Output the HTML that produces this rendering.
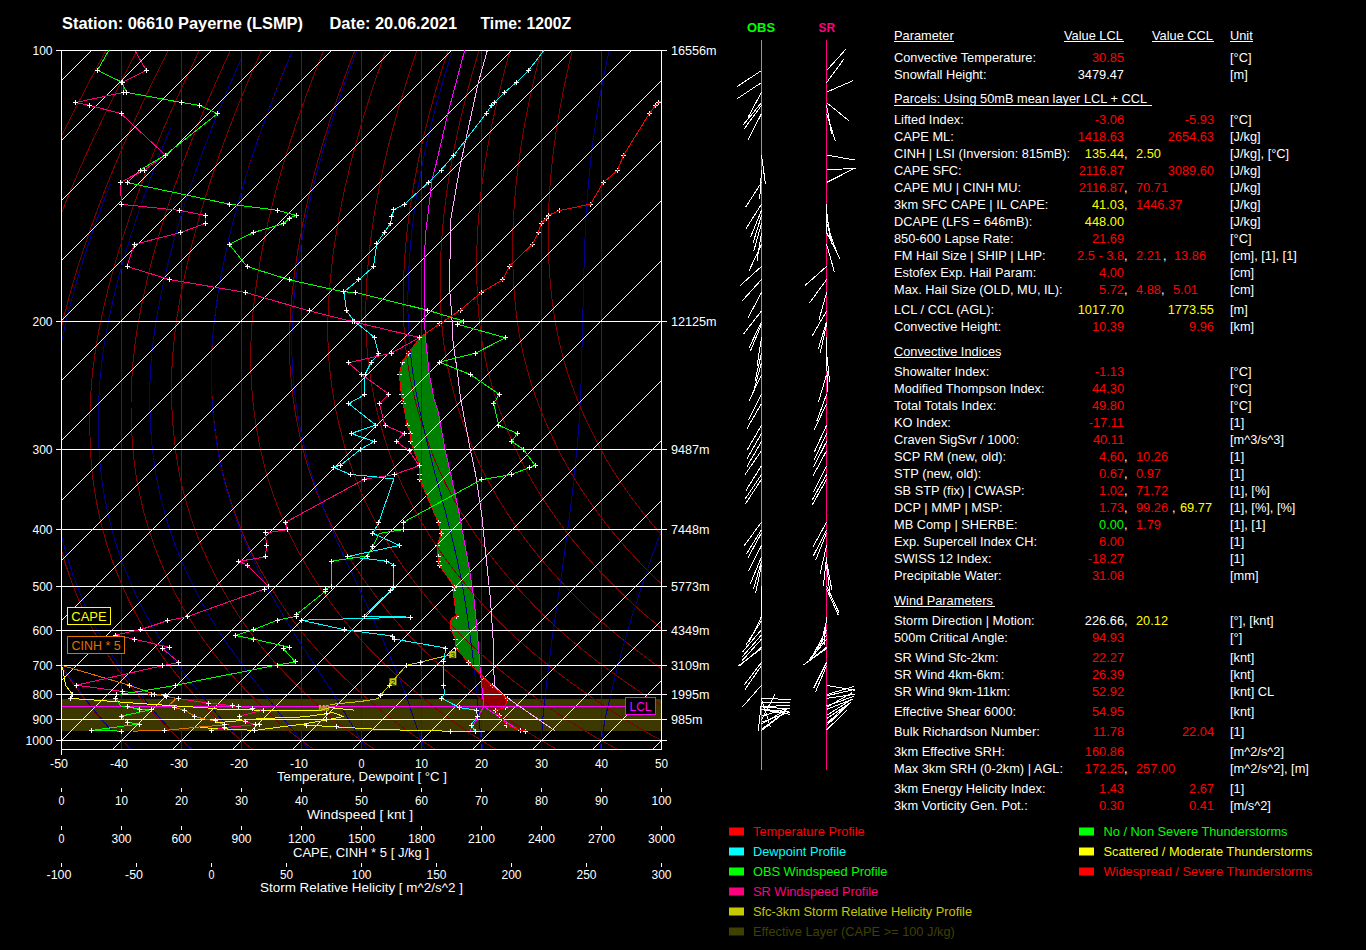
<!DOCTYPE html>
<html><head><meta charset="utf-8"><style>html,body{margin:0;padding:0;background:#000;width:1366px;height:950px;overflow:hidden}svg{display:block}</style></head>
<body><svg width="1366" height="950" viewBox="0 0 1366 950" font-family="Liberation Sans, sans-serif" shape-rendering="auto">
<rect width="1366" height="950" fill="#000"/>
<defs><clipPath id="pc"><rect x="62" y="51" width="599" height="698"/></clipPath></defs>
<rect x="62" y="699" width="599" height="32" fill="#3c3800"/>
<polygon points="424.7,334.0 419.6,337.8 408.3,353.2 402.0,362.1 399.4,374.1 401.3,394.3 403.3,403.6 407.1,425.3 410.3,433.5 410.9,441.5 413.4,449.3 419.7,465.7 419.7,474.5 419.7,479.0 438.0,522.0 441.1,533.4 437.3,545.4 438.0,556.5 438.6,561.2 439.6,565.4 454.4,587.0 453.1,590.9 456.3,616.1 452.0,618.3 450.1,622.7 451.3,630.3 455.8,639.1 455.8,648.0 468.4,662.5 481.0,674.5 480.4,672.0 477.2,630.3 474.1,600.0 472.7,590.9 469.5,570.0 458.8,511.3 450.7,473.9 445.0,449.3 438.1,411.4 434.1,399.3 429.0,372.2 425.3,335.6 425.3,334.0" fill="#008000"/>
<polygon points="481.0,674.5 492.0,685.5 507.4,698.7 505.2,707.5 495.9,710.2 483.8,706.4 480.4,672.0" fill="#900000"/>
<g clip-path="url(#pc)">
<line x1="121.5" y1="51" x2="121.5" y2="749" stroke="#004c00" stroke-width="1" shape-rendering="crispEdges"/>
<line x1="181.5" y1="51" x2="181.5" y2="749" stroke="#004c00" stroke-width="1" shape-rendering="crispEdges"/>
<line x1="241.5" y1="51" x2="241.5" y2="749" stroke="#004c00" stroke-width="1" shape-rendering="crispEdges"/>
<line x1="301.5" y1="51" x2="301.5" y2="749" stroke="#004c00" stroke-width="1" shape-rendering="crispEdges"/>
<line x1="361.5" y1="51" x2="361.5" y2="749" stroke="#004c00" stroke-width="1" shape-rendering="crispEdges"/>
<line x1="421.5" y1="51" x2="421.5" y2="749" stroke="#004c00" stroke-width="1" shape-rendering="crispEdges"/>
<line x1="481.5" y1="51" x2="481.5" y2="749" stroke="#004c00" stroke-width="1" shape-rendering="crispEdges"/>
<line x1="541.5" y1="51" x2="541.5" y2="749" stroke="#004c00" stroke-width="1" shape-rendering="crispEdges"/>
<line x1="601.5" y1="51" x2="601.5" y2="749" stroke="#004c00" stroke-width="1" shape-rendering="crispEdges"/>
<path d="M132.5,3.5 L128.5,10.5 L124.6,17.4 L120.6,24.4 L116.8,31.3 L112.9,38.1 L109.2,44.9 L105.4,51.7 L101.8,58.5 L98.1,65.2 L94.5,71.9 L91.0,78.5 L87.5,85.1 L84.1,91.7 L80.7,98.3 L77.3,104.8 L74.0,111.3 L70.8,117.7 L67.6,124.1 L64.4,130.5 L61.3,136.8 L58.2,143.2 L55.2,149.4 L52.3,155.7 L49.3,161.9 L46.5,168.1 L43.6,174.2 L40.9,180.4 L38.1,186.4 L35.4,192.5 L32.8,198.5 L30.2,204.5 L27.7,210.5 L25.2,216.4 L22.7,222.3 L20.3,228.2 L17.9,234.0 L15.6,239.8 L13.4,245.6 L11.1,251.3 L9.0,257.0 L6.8,262.7 L4.8,268.4 L2.7,274.0 L0.7,279.6 L-1.2,285.1 L-3.1,290.7 L-5.0,296.2 L-6.8,301.6 L-8.5,307.1 L-10.2,312.5 L-11.9,317.9 L-13.5,323.2 L-15.1,328.5 L-16.6,333.8 L-18.0,339.0 L-19.4,344.2 L-20.7,349.3 L-22.0,354.4 L-23.2,359.5 L-24.4,364.5 L-25.5,369.5 L-26.5,374.4 L-27.5,379.3 L-28.5,384.2 L-29.4,389.1 L-30.2,393.9 L-31.1,398.7 L-31.8,403.5 L-32.5,408.2 L-33.2,412.9 L-33.8,417.6 L-34.4,422.3 L-35.0,426.9 L-35.5,431.5 L-36.0,436.1 L-36.4,440.7 L-36.8,445.3 L-37.2,449.9 L-37.6,454.4 L-37.8,458.9 L-38.1,463.4 L-38.2,467.8 L-38.4,472.2 L-38.5,476.6 L-38.5,480.9 L-38.5,485.3 L-38.4,489.5 L-38.3,493.8 L-38.2,498.1 L-38.0,502.3 L-37.8,506.5 L-37.5,510.7 L-37.2,514.9 L-36.9,519.0 L-36.5,523.2 L-36.1,527.3 L-35.7,531.4 L-35.2,535.5 L-34.6,539.5 L-34.1,543.5 L-33.4,547.6 L-32.8,551.5 L-32.1,555.5 L-31.3,559.4 L-30.5,563.4 L-29.7,567.3 L-28.8,571.2 L-27.9,575.0 L-27.0,578.9 L-26.0,582.7 L-25.0,586.6 L-24.0,590.4 L-22.9,594.2 L-21.8,598.0 L-20.7,601.8 L-19.5,605.5 L-18.2,609.3 L-17.0,613.0 L-15.7,616.7 L-14.3,620.4 L-12.9,624.0 L-11.5,627.7 L-10.0,631.3 L-8.5,634.9 L-6.9,638.5 L-5.3,642.0 L-3.6,645.5 L-1.9,649.0 L-0.1,652.5 L1.7,656.0 L3.5,659.5 L5.3,662.9 L7.2,666.3 L9.2,669.7 L11.2,673.1 L13.2,676.5 L15.3,679.9 L17.4,683.2 L19.5,686.5 L21.7,689.9 L23.9,693.2 L26.1,696.5 L28.4,699.8 L30.7,703.1 L33.0,706.4 L35.3,709.7 L37.8,713.0 L40.2,716.2 L42.7,719.4 L45.3,722.6 L48.0,725.7 L50.7,728.8 L53.4,731.9 L56.2,735.0 L59.1,738.0 L62.0,741.0 L64.9,743.9 L67.9,746.9 L71.0,749.8" fill="none" stroke="#800000" stroke-width="1" shape-rendering="crispEdges"/>
<path d="M162.7,3.5 L158.8,10.5 L155.0,17.4 L151.2,24.4 L147.5,31.3 L143.8,38.1 L140.1,44.9 L136.5,51.7 L133.0,58.5 L129.5,65.2 L126.1,71.9 L122.7,78.5 L119.3,85.1 L116.0,91.7 L112.7,98.3 L109.5,104.8 L106.4,111.3 L103.3,117.7 L100.2,124.1 L97.2,130.5 L94.2,136.8 L91.3,143.2 L88.5,149.4 L85.6,155.7 L82.9,161.9 L80.1,168.1 L77.5,174.2 L74.8,180.4 L72.3,186.4 L69.7,192.5 L67.2,198.5 L64.8,204.5 L62.4,210.5 L60.1,216.4 L57.8,222.3 L55.5,228.2 L53.3,234.0 L51.1,239.8 L49.0,245.6 L47.0,251.3 L45.0,257.0 L43.0,262.7 L41.1,268.4 L39.2,274.0 L37.4,279.6 L35.6,285.1 L33.8,290.7 L32.2,296.2 L30.5,301.6 L28.9,307.1 L27.4,312.5 L25.9,317.9 L24.4,323.2 L23.0,328.5 L21.7,333.8 L20.4,339.0 L19.2,344.2 L18.0,349.3 L16.9,354.4 L15.9,359.5 L14.9,364.5 L14.0,369.5 L13.1,374.4 L12.3,379.3 L11.5,384.2 L10.8,389.1 L10.1,393.9 L9.5,398.7 L8.9,403.5 L8.4,408.2 L7.9,412.9 L7.4,417.6 L7.0,422.3 L6.6,426.9 L6.3,431.5 L6.0,436.1 L5.7,440.7 L5.5,445.3 L5.3,449.9 L5.2,454.4 L5.1,458.9 L5.1,463.4 L5.1,467.8 L5.1,472.2 L5.2,476.6 L5.4,480.9 L5.6,485.3 L5.9,489.5 L6.1,493.8 L6.5,498.1 L6.9,502.3 L7.3,506.5 L7.7,510.7 L8.2,514.9 L8.8,519.0 L9.3,523.2 L10.0,527.3 L10.6,531.4 L11.3,535.5 L12.0,539.5 L12.8,543.5 L13.7,547.6 L14.5,551.5 L15.4,555.5 L16.4,559.4 L17.4,563.4 L18.5,567.3 L19.5,571.2 L20.6,575.0 L21.8,578.9 L23.0,582.7 L24.2,586.6 L25.5,590.4 L26.7,594.2 L28.1,598.0 L29.4,601.8 L30.9,605.5 L32.3,609.3 L33.8,613.0 L35.3,616.7 L36.9,620.4 L38.5,624.0 L40.2,627.7 L41.9,631.3 L43.7,634.9 L45.5,638.5 L47.3,642.0 L49.2,645.5 L51.2,649.0 L53.2,652.5 L55.2,656.0 L57.3,659.5 L59.4,662.9 L61.5,666.3 L63.7,669.7 L65.9,673.1 L68.2,676.5 L70.5,679.9 L72.8,683.2 L75.2,686.5 L77.7,689.9 L80.1,693.2 L82.6,696.5 L85.1,699.8 L87.6,703.1 L90.2,706.4 L92.8,709.7 L95.5,713.0 L98.2,716.2 L101.0,719.4 L103.8,722.6 L106.7,725.7 L109.6,728.8 L112.7,731.9 L115.7,735.0 L118.8,738.0 L122.0,741.0 L125.2,743.9 L128.5,746.9 L131.8,749.8" fill="none" stroke="#800000" stroke-width="1" shape-rendering="crispEdges"/>
<path d="M192.9,3.5 L189.1,10.5 L185.4,17.4 L181.8,24.4 L178.1,31.3 L174.6,38.1 L171.1,44.9 L167.6,51.7 L164.2,58.5 L160.9,65.2 L157.6,71.9 L154.3,78.5 L151.1,85.1 L147.9,91.7 L144.8,98.3 L141.8,104.8 L138.8,111.3 L135.8,117.7 L132.9,124.1 L130.0,130.5 L127.2,136.8 L124.4,143.2 L121.7,149.4 L119.0,155.7 L116.4,161.9 L113.8,168.1 L111.3,174.2 L108.8,180.4 L106.4,186.4 L104.0,192.5 L101.7,198.5 L99.4,204.5 L97.1,210.5 L94.9,216.4 L92.8,222.3 L90.7,228.2 L88.7,234.0 L86.6,239.8 L84.7,245.6 L82.8,251.3 L80.9,257.0 L79.1,262.7 L77.4,268.4 L75.6,274.0 L74.0,279.6 L72.4,285.1 L70.8,290.7 L69.3,296.2 L67.8,301.6 L66.4,307.1 L65.0,312.5 L63.6,317.9 L62.3,323.2 L61.1,328.5 L59.9,333.8 L58.8,339.0 L57.8,344.2 L56.8,349.3 L55.9,354.4 L55.0,359.5 L54.2,364.5 L53.5,369.5 L52.8,374.4 L52.1,379.3 L51.5,384.2 L51.0,389.1 L50.5,393.9 L50.0,398.7 L49.6,403.5 L49.3,408.2 L48.9,412.9 L48.7,417.6 L48.4,422.3 L48.3,426.9 L48.1,431.5 L48.0,436.1 L47.9,440.7 L47.9,445.3 L47.9,449.9 L47.9,454.4 L48.0,458.9 L48.2,463.4 L48.4,467.8 L48.6,472.2 L48.9,476.6 L49.3,480.9 L49.7,485.3 L50.1,489.5 L50.6,493.8 L51.1,498.1 L51.7,502.3 L52.3,506.5 L53.0,510.7 L53.7,514.9 L54.4,519.0 L55.2,523.2 L56.0,527.3 L56.9,531.4 L57.8,535.5 L58.7,539.5 L59.7,543.5 L60.8,547.6 L61.8,551.5 L63.0,555.5 L64.1,559.4 L65.3,563.4 L66.6,567.3 L67.9,571.2 L69.2,575.0 L70.6,578.9 L72.0,582.7 L73.4,586.6 L74.9,590.4 L76.4,594.2 L78.0,598.0 L79.5,601.8 L81.2,605.5 L82.9,609.3 L84.6,613.0 L86.3,616.7 L88.1,620.4 L90.0,624.0 L91.9,627.7 L93.8,631.3 L95.8,634.9 L97.8,638.5 L99.9,642.0 L102.1,645.5 L104.2,649.0 L106.5,652.5 L108.7,656.0 L111.0,659.5 L113.4,662.9 L115.7,666.3 L118.2,669.7 L120.6,673.1 L123.1,676.5 L125.7,679.9 L128.3,683.2 L130.9,686.5 L133.6,689.9 L136.3,693.2 L139.0,696.5 L141.8,699.8 L144.6,703.1 L147.4,706.4 L150.2,709.7 L153.2,713.0 L156.1,716.2 L159.2,719.4 L162.3,722.6 L165.4,725.7 L168.6,728.8 L171.9,731.9 L175.2,735.0 L178.6,738.0 L182.0,741.0 L185.5,743.9 L189.1,746.9 L192.7,749.8" fill="none" stroke="#800000" stroke-width="1" shape-rendering="crispEdges"/>
<path d="M223.0,3.5 L219.4,10.5 L215.8,17.4 L212.3,24.4 L208.8,31.3 L205.4,38.1 L202.1,44.9 L198.7,51.7 L195.5,58.5 L192.3,65.2 L189.1,71.9 L186.0,78.5 L182.9,85.1 L179.9,91.7 L176.9,98.3 L174.0,104.8 L171.1,111.3 L168.3,117.7 L165.5,124.1 L162.8,130.5 L160.1,136.8 L157.5,143.2 L154.9,149.4 L152.4,155.7 L149.9,161.9 L147.5,168.1 L145.1,174.2 L142.8,180.4 L140.5,186.4 L138.3,192.5 L136.1,198.5 L133.9,204.5 L131.9,210.5 L129.8,216.4 L127.8,222.3 L125.9,228.2 L124.0,234.0 L122.2,239.8 L120.4,245.6 L118.6,251.3 L116.9,257.0 L115.3,262.7 L113.7,268.4 L112.1,274.0 L110.6,279.6 L109.1,285.1 L107.7,290.7 L106.4,296.2 L105.1,301.6 L103.8,307.1 L102.6,312.5 L101.4,317.9 L100.3,323.2 L99.2,328.5 L98.2,333.8 L97.3,339.0 L96.4,344.2 L95.6,349.3 L94.9,354.4 L94.2,359.5 L93.5,364.5 L92.9,369.5 L92.4,374.4 L91.9,379.3 L91.5,384.2 L91.1,389.1 L90.8,393.9 L90.5,398.7 L90.3,403.5 L90.1,408.2 L90.0,412.9 L89.9,417.6 L89.9,422.3 L89.9,426.9 L89.9,431.5 L90.0,436.1 L90.1,440.7 L90.2,445.3 L90.4,449.9 L90.7,454.4 L91.0,458.9 L91.3,463.4 L91.7,467.8 L92.1,472.2 L92.6,476.6 L93.2,480.9 L93.8,485.3 L94.4,489.5 L95.1,493.8 L95.8,498.1 L96.6,502.3 L97.4,506.5 L98.3,510.7 L99.2,514.9 L100.1,519.0 L101.1,523.2 L102.1,527.3 L103.2,531.4 L104.3,535.5 L105.4,539.5 L106.6,543.5 L107.9,547.6 L109.1,551.5 L110.5,555.5 L111.9,559.4 L113.3,563.4 L114.8,567.3 L116.3,571.2 L117.8,575.0 L119.4,578.9 L121.0,582.7 L122.7,586.6 L124.3,590.4 L126.1,594.2 L127.8,598.0 L129.7,601.8 L131.5,605.5 L133.4,609.3 L135.3,613.0 L137.3,616.7 L139.4,620.4 L141.4,624.0 L143.6,627.7 L145.7,631.3 L147.9,634.9 L150.2,638.5 L152.5,642.0 L154.9,645.5 L157.3,649.0 L159.8,652.5 L162.2,656.0 L164.8,659.5 L167.4,662.9 L170.0,666.3 L172.6,669.7 L175.4,673.1 L178.1,676.5 L180.9,679.9 L183.8,683.2 L186.6,686.5 L189.6,689.9 L192.5,693.2 L195.5,696.5 L198.5,699.8 L201.5,703.1 L204.6,706.4 L207.7,709.7 L210.9,713.0 L214.1,716.2 L217.4,719.4 L220.7,722.6 L224.2,725.7 L227.6,728.8 L231.2,731.9 L234.7,735.0 L238.4,738.0 L242.1,741.0 L245.8,743.9 L249.7,746.9 L253.5,749.8" fill="none" stroke="#800000" stroke-width="1" shape-rendering="crispEdges"/>
<path d="M253.2,3.5 L249.7,10.5 L246.3,17.4 L242.9,24.4 L239.5,31.3 L236.3,38.1 L233.0,44.9 L229.8,51.7 L226.7,58.5 L223.6,65.2 L220.6,71.9 L217.6,78.5 L214.7,85.1 L211.8,91.7 L209.0,98.3 L206.2,104.8 L203.5,111.3 L200.8,117.7 L198.2,124.1 L195.6,130.5 L193.1,136.8 L190.6,143.2 L188.2,149.4 L185.8,155.7 L183.4,161.9 L181.2,168.1 L178.9,174.2 L176.8,180.4 L174.6,186.4 L172.5,192.5 L170.5,198.5 L168.5,204.5 L166.6,210.5 L164.7,216.4 L162.9,222.3 L161.1,228.2 L159.4,234.0 L157.7,239.8 L156.0,245.6 L154.4,251.3 L152.9,257.0 L151.4,262.7 L150.0,268.4 L148.6,274.0 L147.2,279.6 L145.9,285.1 L144.7,290.7 L143.5,296.2 L142.3,301.6 L141.2,307.1 L140.2,312.5 L139.2,317.9 L138.2,323.2 L137.3,328.5 L136.5,333.8 L135.7,339.0 L135.0,344.2 L134.4,349.3 L133.8,354.4 L133.3,359.5 L132.8,364.5 L132.4,369.5 L132.1,374.4 L131.8,379.3 L131.5,384.2 L131.3,389.1 L131.2,393.9 L131.1,398.7 L131.0,403.5 L131.0,408.2 L131.1,412.9 L131.2,417.6 L131.3,422.3 L131.5,426.9 L131.7,431.5 L132.0,436.1 L132.3,440.7 L132.6,445.3 L133.0,449.9 L133.4,454.4 L133.9,458.9 L134.4,463.4 L135.0,467.8 L135.6,472.2 L136.3,476.6 L137.1,480.9 L137.8,485.3 L138.7,489.5 L139.6,493.8 L140.5,498.1 L141.5,502.3 L142.5,506.5 L143.5,510.7 L144.6,514.9 L145.8,519.0 L147.0,523.2 L148.2,527.3 L149.4,531.4 L150.7,535.5 L152.1,539.5 L153.5,543.5 L155.0,547.6 L156.5,551.5 L158.0,555.5 L159.6,559.4 L161.2,563.4 L162.9,567.3 L164.6,571.2 L166.4,575.0 L168.2,578.9 L170.0,582.7 L171.9,586.6 L173.8,590.4 L175.7,594.2 L177.7,598.0 L179.8,601.8 L181.8,605.5 L183.9,609.3 L186.1,613.0 L188.3,616.7 L190.6,620.4 L192.9,624.0 L195.2,627.7 L197.6,631.3 L200.1,634.9 L202.6,638.5 L205.1,642.0 L207.7,645.5 L210.4,649.0 L213.0,652.5 L215.8,656.0 L218.6,659.5 L221.4,662.9 L224.2,666.3 L227.1,669.7 L230.1,673.1 L233.1,676.5 L236.1,679.9 L239.2,683.2 L242.3,686.5 L245.5,689.9 L248.7,693.2 L251.9,696.5 L255.2,699.8 L258.5,703.1 L261.8,706.4 L265.1,709.7 L268.6,713.0 L272.0,716.2 L275.6,719.4 L279.2,722.6 L282.9,725.7 L286.6,728.8 L290.4,731.9 L294.3,735.0 L298.2,738.0 L302.1,741.0 L306.2,743.9 L310.2,746.9 L314.4,749.8" fill="none" stroke="#800000" stroke-width="1" shape-rendering="crispEdges"/>
<path d="M283.3,3.5 L280.0,10.5 L276.7,17.4 L273.4,24.4 L270.2,31.3 L267.1,38.1 L264.0,44.9 L260.9,51.7 L258.0,58.5 L255.0,65.2 L252.1,71.9 L249.3,78.5 L246.5,85.1 L243.8,91.7 L241.1,98.3 L238.4,104.8 L235.8,111.3 L233.3,117.7 L230.8,124.1 L228.4,130.5 L226.0,136.8 L223.7,143.2 L221.4,149.4 L219.2,155.7 L217.0,161.9 L214.8,168.1 L212.8,174.2 L210.7,180.4 L208.7,186.4 L206.8,192.5 L204.9,198.5 L203.1,204.5 L201.3,210.5 L199.6,216.4 L197.9,222.3 L196.3,228.2 L194.7,234.0 L193.2,239.8 L191.7,245.6 L190.3,251.3 L188.9,257.0 L187.5,262.7 L186.3,268.4 L185.0,274.0 L183.8,279.6 L182.7,285.1 L181.6,290.7 L180.6,296.2 L179.6,301.6 L178.7,307.1 L177.8,312.5 L176.9,317.9 L176.2,323.2 L175.4,328.5 L174.8,333.8 L174.2,339.0 L173.6,344.2 L173.2,349.3 L172.8,354.4 L172.4,359.5 L172.1,364.5 L171.9,369.5 L171.7,374.4 L171.6,379.3 L171.5,384.2 L171.5,389.1 L171.5,393.9 L171.6,398.7 L171.8,403.5 L171.9,408.2 L172.2,412.9 L172.4,417.6 L172.8,422.3 L173.1,426.9 L173.5,431.5 L174.0,436.1 L174.5,440.7 L175.0,445.3 L175.5,449.9 L176.1,454.4 L176.8,458.9 L177.5,463.4 L178.3,467.8 L179.1,472.2 L180.0,476.6 L180.9,480.9 L181.9,485.3 L183.0,489.5 L184.0,493.8 L185.2,498.1 L186.3,502.3 L187.5,506.5 L188.8,510.7 L190.1,514.9 L191.4,519.0 L192.8,523.2 L194.2,527.3 L195.7,531.4 L197.2,535.5 L198.8,539.5 L200.4,543.5 L202.1,547.6 L203.8,551.5 L205.5,555.5 L207.3,559.4 L209.2,563.4 L211.1,567.3 L213.0,571.2 L215.0,575.0 L217.0,578.9 L219.0,582.7 L221.1,586.6 L223.2,590.4 L225.4,594.2 L227.6,598.0 L229.9,601.8 L232.2,605.5 L234.5,609.3 L236.9,613.0 L239.3,616.7 L241.8,620.4 L244.3,624.0 L246.9,627.7 L249.5,631.3 L252.2,634.9 L254.9,638.5 L257.7,642.0 L260.5,645.5 L263.4,649.0 L266.3,652.5 L269.3,656.0 L272.3,659.5 L275.4,662.9 L278.5,666.3 L281.6,669.7 L284.8,673.1 L288.1,676.5 L291.3,679.9 L294.7,683.2 L298.0,686.5 L301.4,689.9 L304.9,693.2 L308.4,696.5 L311.9,699.8 L315.4,703.1 L319.0,706.4 L322.6,709.7 L326.3,713.0 L330.0,716.2 L333.8,719.4 L337.7,722.6 L341.6,725.7 L345.6,728.8 L349.7,731.9 L353.8,735.0 L357.9,738.0 L362.2,741.0 L366.5,743.9 L370.8,746.9 L375.2,749.8" fill="none" stroke="#800000" stroke-width="1" shape-rendering="crispEdges"/>
<path d="M313.5,3.5 L310.3,10.5 L307.1,17.4 L304.0,24.4 L300.9,31.3 L297.9,38.1 L295.0,44.9 L292.0,51.7 L289.2,58.5 L286.4,65.2 L283.6,71.9 L280.9,78.5 L278.3,85.1 L275.7,91.7 L273.1,98.3 L270.6,104.8 L268.2,111.3 L265.8,117.7 L263.5,124.1 L261.2,130.5 L258.9,136.8 L256.8,143.2 L254.6,149.4 L252.5,155.7 L250.5,161.9 L248.5,168.1 L246.6,174.2 L244.7,180.4 L242.9,186.4 L241.1,192.5 L239.4,198.5 L237.7,204.5 L236.1,210.5 L234.5,216.4 L233.0,222.3 L231.5,228.2 L230.1,234.0 L228.7,239.8 L227.4,245.6 L226.1,251.3 L224.9,257.0 L223.7,262.7 L222.6,268.4 L221.5,274.0 L220.5,279.6 L219.5,285.1 L218.6,290.7 L217.7,296.2 L216.9,301.6 L216.1,307.1 L215.4,312.5 L214.7,317.9 L214.1,323.2 L213.5,328.5 L213.0,333.8 L212.6,339.0 L212.3,344.2 L212.0,349.3 L211.7,354.4 L211.5,359.5 L211.4,364.5 L211.4,369.5 L211.4,374.4 L211.4,379.3 L211.5,384.2 L211.7,389.1 L211.9,393.9 L212.2,398.7 L212.5,403.5 L212.8,408.2 L213.2,412.9 L213.7,417.6 L214.2,422.3 L214.7,426.9 L215.3,431.5 L216.0,436.1 L216.6,440.7 L217.3,445.3 L218.1,449.9 L218.9,454.4 L219.7,458.9 L220.7,463.4 L221.6,467.8 L222.6,472.2 L223.7,476.6 L224.8,480.9 L226.0,485.3 L227.2,489.5 L228.5,493.8 L229.8,498.1 L231.2,502.3 L232.6,506.5 L234.1,510.7 L235.6,514.9 L237.1,519.0 L238.7,523.2 L240.3,527.3 L242.0,531.4 L243.7,535.5 L245.5,539.5 L247.3,543.5 L249.1,547.6 L251.1,551.5 L253.0,555.5 L255.0,559.4 L257.1,563.4 L259.2,567.3 L261.3,571.2 L263.5,575.0 L265.8,578.9 L268.0,582.7 L270.3,586.6 L272.7,590.4 L275.1,594.2 L277.5,598.0 L280.0,601.8 L282.5,605.5 L285.0,609.3 L287.6,613.0 L290.3,616.7 L293.0,620.4 L295.8,624.0 L298.6,627.7 L301.4,631.3 L304.3,634.9 L307.3,638.5 L310.3,642.0 L313.4,645.5 L316.5,649.0 L319.6,652.5 L322.8,656.0 L326.1,659.5 L329.4,662.9 L332.7,666.3 L336.1,669.7 L339.5,673.1 L343.0,676.5 L346.6,679.9 L350.1,683.2 L353.7,686.5 L357.4,689.9 L361.1,693.2 L364.8,696.5 L368.6,699.8 L372.3,703.1 L376.2,706.4 L380.0,709.7 L384.0,713.0 L388.0,716.2 L392.0,719.4 L396.2,722.6 L400.3,725.7 L404.6,728.8 L408.9,731.9 L413.3,735.0 L417.7,738.0 L422.2,741.0 L426.8,743.9 L431.4,746.9 L436.1,749.8" fill="none" stroke="#800000" stroke-width="1" shape-rendering="crispEdges"/>
<path d="M343.6,3.5 L340.6,10.5 L337.5,17.4 L334.5,24.4 L331.6,31.3 L328.7,38.1 L325.9,44.9 L323.2,51.7 L320.4,58.5 L317.8,65.2 L315.2,71.9 L312.6,78.5 L310.1,85.1 L307.6,91.7 L305.2,98.3 L302.9,104.8 L300.6,111.3 L298.3,117.7 L296.1,124.1 L294.0,130.5 L291.9,136.8 L289.8,143.2 L287.9,149.4 L285.9,155.7 L284.0,161.9 L282.2,168.1 L280.4,174.2 L278.7,180.4 L277.0,186.4 L275.4,192.5 L273.8,198.5 L272.3,204.5 L270.8,210.5 L269.4,216.4 L268.0,222.3 L266.7,228.2 L265.4,234.0 L264.2,239.8 L263.0,245.6 L261.9,251.3 L260.8,257.0 L259.8,262.7 L258.9,268.4 L257.9,274.0 L257.1,279.6 L256.3,285.1 L255.5,290.7 L254.8,296.2 L254.2,301.6 L253.5,307.1 L253.0,312.5 L252.5,317.9 L252.0,323.2 L251.6,328.5 L251.3,333.8 L251.1,339.0 L250.9,344.2 L250.7,349.3 L250.7,354.4 L250.7,359.5 L250.7,364.5 L250.8,369.5 L251.0,374.4 L251.2,379.3 L251.5,384.2 L251.9,389.1 L252.2,393.9 L252.7,398.7 L253.2,403.5 L253.7,408.2 L254.3,412.9 L255.0,417.6 L255.6,422.3 L256.4,426.9 L257.1,431.5 L258.0,436.1 L258.8,440.7 L259.7,445.3 L260.6,449.9 L261.6,454.4 L262.7,458.9 L263.8,463.4 L264.9,467.8 L266.1,472.2 L267.4,476.6 L268.7,480.9 L270.1,485.3 L271.5,489.5 L273.0,493.8 L274.5,498.1 L276.1,502.3 L277.7,506.5 L279.3,510.7 L281.0,514.9 L282.8,519.0 L284.6,523.2 L286.4,527.3 L288.3,531.4 L290.2,535.5 L292.1,539.5 L294.2,543.5 L296.2,547.6 L298.4,551.5 L300.5,555.5 L302.8,559.4 L305.0,563.4 L307.4,567.3 L309.7,571.2 L312.1,575.0 L314.5,578.9 L317.0,582.7 L319.5,586.6 L322.1,590.4 L324.7,594.2 L327.4,598.0 L330.1,601.8 L332.8,605.5 L335.6,609.3 L338.4,613.0 L341.3,616.7 L344.2,620.4 L347.2,624.0 L350.2,627.7 L353.3,631.3 L356.5,634.9 L359.7,638.5 L362.9,642.0 L366.2,645.5 L369.5,649.0 L372.9,652.5 L376.4,656.0 L379.9,659.5 L383.4,662.9 L387.0,666.3 L390.6,669.7 L394.3,673.1 L398.0,676.5 L401.8,679.9 L405.6,683.2 L409.4,686.5 L413.3,689.9 L417.3,693.2 L421.2,696.5 L425.2,699.8 L429.3,703.1 L433.4,706.4 L437.5,709.7 L441.7,713.0 L445.9,716.2 L450.2,719.4 L454.6,722.6 L459.1,725.7 L463.6,728.8 L468.2,731.9 L472.8,735.0 L477.5,738.0 L482.3,741.0 L487.1,743.9 L492.0,746.9 L496.9,749.8" fill="none" stroke="#800000" stroke-width="1" shape-rendering="crispEdges"/>
<path d="M373.8,3.5 L370.8,10.5 L367.9,17.4 L365.1,24.4 L362.3,31.3 L359.6,38.1 L356.9,44.9 L354.3,51.7 L351.7,58.5 L349.1,65.2 L346.7,71.9 L344.3,78.5 L341.9,85.1 L339.6,91.7 L337.3,98.3 L335.1,104.8 L332.9,111.3 L330.8,117.7 L328.8,124.1 L326.8,130.5 L324.8,136.8 L322.9,143.2 L321.1,149.4 L319.3,155.7 L317.6,161.9 L315.9,168.1 L314.2,174.2 L312.7,180.4 L311.1,186.4 L309.6,192.5 L308.2,198.5 L306.8,204.5 L305.5,210.5 L304.3,216.4 L303.0,222.3 L301.9,228.2 L300.8,234.0 L299.7,239.8 L298.7,245.6 L297.7,251.3 L296.8,257.0 L296.0,262.7 L295.2,268.4 L294.4,274.0 L293.7,279.6 L293.1,285.1 L292.5,290.7 L291.9,296.2 L291.4,301.6 L291.0,307.1 L290.6,312.5 L290.3,317.9 L290.0,323.2 L289.7,328.5 L289.6,333.8 L289.5,339.0 L289.5,344.2 L289.5,349.3 L289.6,354.4 L289.8,359.5 L290.0,364.5 L290.3,369.5 L290.7,374.4 L291.1,379.3 L291.5,384.2 L292.0,389.1 L292.6,393.9 L293.2,398.7 L293.9,403.5 L294.6,408.2 L295.4,412.9 L296.2,417.6 L297.1,422.3 L298.0,426.9 L298.9,431.5 L299.9,436.1 L301.0,440.7 L302.1,445.3 L303.2,449.9 L304.4,454.4 L305.6,458.9 L306.9,463.4 L308.2,467.8 L309.6,472.2 L311.1,476.6 L312.6,480.9 L314.2,485.3 L315.8,489.5 L317.4,493.8 L319.2,498.1 L320.9,502.3 L322.7,506.5 L324.6,510.7 L326.5,514.9 L328.4,519.0 L330.4,523.2 L332.5,527.3 L334.5,531.4 L336.7,535.5 L338.8,539.5 L341.1,543.5 L343.3,547.6 L345.7,551.5 L348.1,555.5 L350.5,559.4 L353.0,563.4 L355.5,567.3 L358.1,571.2 L360.7,575.0 L363.3,578.9 L366.0,582.7 L368.8,586.6 L371.6,590.4 L374.4,594.2 L377.2,598.0 L380.2,601.8 L383.1,605.5 L386.1,609.3 L389.2,613.0 L392.3,616.7 L395.5,620.4 L398.7,624.0 L401.9,627.7 L405.2,631.3 L408.6,634.9 L412.0,638.5 L415.5,642.0 L419.0,645.5 L422.6,649.0 L426.2,652.5 L429.9,656.0 L433.6,659.5 L437.4,662.9 L441.2,666.3 L445.1,669.7 L449.0,673.1 L453.0,676.5 L457.0,679.9 L461.0,683.2 L465.1,686.5 L469.3,689.9 L473.5,693.2 L477.7,696.5 L481.9,699.8 L486.2,703.1 L490.6,706.4 L494.9,709.7 L499.4,713.0 L503.9,716.2 L508.5,719.4 L513.1,722.6 L517.8,725.7 L522.6,728.8 L527.4,731.9 L532.3,735.0 L537.3,738.0 L542.3,741.0 L547.4,743.9 L552.5,746.9 L557.7,749.8" fill="none" stroke="#800000" stroke-width="1" shape-rendering="crispEdges"/>
<path d="M404.0,3.5 L401.1,10.5 L398.4,17.4 L395.7,24.4 L393.0,31.3 L390.4,38.1 L387.9,44.9 L385.4,51.7 L382.9,58.5 L380.5,65.2 L378.2,71.9 L375.9,78.5 L373.7,85.1 L371.5,91.7 L369.4,98.3 L367.3,104.8 L365.3,111.3 L363.3,117.7 L361.4,124.1 L359.6,130.5 L357.8,136.8 L356.0,143.2 L354.3,149.4 L352.7,155.7 L351.1,161.9 L349.5,168.1 L348.1,174.2 L346.6,180.4 L345.2,186.4 L343.9,192.5 L342.6,198.5 L341.4,204.5 L340.3,210.5 L339.1,216.4 L338.1,222.3 L337.1,228.2 L336.1,234.0 L335.2,239.8 L334.3,245.6 L333.5,251.3 L332.8,257.0 L332.1,262.7 L331.5,268.4 L330.9,274.0 L330.3,279.6 L329.8,285.1 L329.4,290.7 L329.0,296.2 L328.7,301.6 L328.4,307.1 L328.2,312.5 L328.0,317.9 L327.9,323.2 L327.9,328.5 L327.9,333.8 L327.9,339.0 L328.1,344.2 L328.3,349.3 L328.6,354.4 L328.9,359.5 L329.3,364.5 L329.8,369.5 L330.3,374.4 L330.9,379.3 L331.5,384.2 L332.2,389.1 L333.0,393.9 L333.8,398.7 L334.6,403.5 L335.5,408.2 L336.5,412.9 L337.5,417.6 L338.5,422.3 L339.6,426.9 L340.8,431.5 L341.9,436.1 L343.2,440.7 L344.4,445.3 L345.7,449.9 L347.1,454.4 L348.5,458.9 L350.0,463.4 L351.5,467.8 L353.1,472.2 L354.8,476.6 L356.5,480.9 L358.3,485.3 L360.1,489.5 L361.9,493.8 L363.8,498.1 L365.8,502.3 L367.8,506.5 L369.9,510.7 L372.0,514.9 L374.1,519.0 L376.3,523.2 L378.5,527.3 L380.8,531.4 L383.1,535.5 L385.5,539.5 L388.0,543.5 L390.4,547.6 L393.0,551.5 L395.6,555.5 L398.2,559.4 L400.9,563.4 L403.7,567.3 L406.4,571.2 L409.3,575.0 L412.1,578.9 L415.0,582.7 L418.0,586.6 L421.0,590.4 L424.0,594.2 L427.1,598.0 L430.3,601.8 L433.4,605.5 L436.7,609.3 L440.0,613.0 L443.3,616.7 L446.7,620.4 L450.1,624.0 L453.6,627.7 L457.1,631.3 L460.7,634.9 L464.4,638.5 L468.1,642.0 L471.9,645.5 L475.7,649.0 L479.5,652.5 L483.4,656.0 L487.4,659.5 L491.4,662.9 L495.5,666.3 L499.6,669.7 L503.7,673.1 L507.9,676.5 L512.2,679.9 L516.5,683.2 L520.8,686.5 L525.2,689.9 L529.7,693.2 L534.1,696.5 L538.6,699.8 L543.2,703.1 L547.8,706.4 L552.4,709.7 L557.1,713.0 L561.8,716.2 L566.7,719.4 L571.6,722.6 L576.5,725.7 L581.6,728.8 L586.7,731.9 L591.8,735.0 L597.1,738.0 L602.3,741.0 L607.7,743.9 L613.1,746.9 L618.6,749.8" fill="none" stroke="#800000" stroke-width="1" shape-rendering="crispEdges"/>
<path d="M434.1,3.5 L431.4,10.5 L428.8,17.4 L426.2,24.4 L423.7,31.3 L421.2,38.1 L418.8,44.9 L416.5,51.7 L414.2,58.5 L411.9,65.2 L409.7,71.9 L407.6,78.5 L405.5,85.1 L403.4,91.7 L401.5,98.3 L399.5,104.8 L397.7,111.3 L395.8,117.7 L394.1,124.1 L392.4,130.5 L390.7,136.8 L389.1,143.2 L387.5,149.4 L386.1,155.7 L384.6,161.9 L383.2,168.1 L381.9,174.2 L380.6,180.4 L379.4,186.4 L378.2,192.5 L377.1,198.5 L376.0,204.5 L375.0,210.5 L374.0,216.4 L373.1,222.3 L372.3,228.2 L371.5,234.0 L370.7,239.8 L370.0,245.6 L369.4,251.3 L368.8,257.0 L368.2,262.7 L367.8,268.4 L367.3,274.0 L366.9,279.6 L366.6,285.1 L366.4,290.7 L366.1,296.2 L366.0,301.6 L365.9,307.1 L365.8,312.5 L365.8,317.9 L365.8,323.2 L366.0,328.5 L366.1,333.8 L366.4,339.0 L366.7,344.2 L367.1,349.3 L367.5,354.4 L368.1,359.5 L368.6,364.5 L369.3,369.5 L370.0,374.4 L370.7,379.3 L371.5,384.2 L372.4,389.1 L373.3,393.9 L374.3,398.7 L375.3,403.5 L376.4,408.2 L377.5,412.9 L378.7,417.6 L380.0,422.3 L381.2,426.9 L382.6,431.5 L383.9,436.1 L385.3,440.7 L386.8,445.3 L388.3,449.9 L389.8,454.4 L391.5,458.9 L393.1,463.4 L394.9,467.8 L396.6,472.2 L398.5,476.6 L400.4,480.9 L402.3,485.3 L404.3,489.5 L406.4,493.8 L408.5,498.1 L410.7,502.3 L412.9,506.5 L415.1,510.7 L417.4,514.9 L419.8,519.0 L422.2,523.2 L424.6,527.3 L427.1,531.4 L429.6,535.5 L432.2,539.5 L434.8,543.5 L437.5,547.6 L440.3,551.5 L443.1,555.5 L446.0,559.4 L448.9,563.4 L451.8,567.3 L454.8,571.2 L457.8,575.0 L460.9,578.9 L464.1,582.7 L467.2,586.6 L470.4,590.4 L473.7,594.2 L477.0,598.0 L480.4,601.8 L483.8,605.5 L487.2,609.3 L490.7,613.0 L494.3,616.7 L497.9,620.4 L501.6,624.0 L505.3,627.7 L509.0,631.3 L512.9,634.9 L516.7,638.5 L520.7,642.0 L524.7,645.5 L528.7,649.0 L532.8,652.5 L537.0,656.0 L541.2,659.5 L545.4,662.9 L549.7,666.3 L554.0,669.7 L558.4,673.1 L562.9,676.5 L567.4,679.9 L571.9,683.2 L576.5,686.5 L581.2,689.9 L585.9,693.2 L590.6,696.5 L595.3,699.8 L600.1,703.1 L604.9,706.4 L609.8,709.7 L614.8,713.0 L619.8,716.2 L624.9,719.4 L630.0,722.6 L635.3,725.7 L640.6,728.8 L645.9,731.9 L651.3,735.0 L656.8,738.0 L662.4,741.0 L668.0,743.9 L673.7,746.9 L679.4,749.8" fill="none" stroke="#800000" stroke-width="1" shape-rendering="crispEdges"/>
<path d="M464.3,3.5 L461.7,10.5 L459.2,17.4 L456.8,24.4 L454.4,31.3 L452.1,38.1 L449.8,44.9 L447.6,51.7 L445.4,58.5 L443.3,65.2 L441.2,71.9 L439.2,78.5 L437.3,85.1 L435.4,91.7 L433.5,98.3 L431.8,104.8 L430.0,111.3 L428.3,117.7 L426.7,124.1 L425.2,130.5 L423.6,136.8 L422.2,143.2 L420.8,149.4 L419.4,155.7 L418.1,161.9 L416.9,168.1 L415.7,174.2 L414.6,180.4 L413.5,186.4 L412.5,192.5 L411.5,198.5 L410.6,204.5 L409.7,210.5 L408.9,216.4 L408.2,222.3 L407.5,228.2 L406.8,234.0 L406.2,239.8 L405.7,245.6 L405.2,251.3 L404.8,257.0 L404.4,262.7 L404.1,268.4 L403.8,274.0 L403.6,279.6 L403.4,285.1 L403.3,290.7 L403.2,296.2 L403.2,301.6 L403.3,307.1 L403.4,312.5 L403.6,317.9 L403.8,323.2 L404.1,328.5 L404.4,333.8 L404.8,339.0 L405.3,344.2 L405.9,349.3 L406.5,354.4 L407.2,359.5 L407.9,364.5 L408.7,369.5 L409.6,374.4 L410.5,379.3 L411.5,384.2 L412.6,389.1 L413.7,393.9 L414.8,398.7 L416.0,403.5 L417.3,408.2 L418.6,412.9 L420.0,417.6 L421.4,422.3 L422.9,426.9 L424.4,431.5 L425.9,436.1 L427.5,440.7 L429.2,445.3 L430.8,449.9 L432.6,454.4 L434.4,458.9 L436.2,463.4 L438.2,467.8 L440.1,472.2 L442.2,476.6 L444.3,480.9 L446.4,485.3 L448.6,489.5 L450.9,493.8 L453.2,498.1 L455.5,502.3 L457.9,506.5 L460.4,510.7 L462.9,514.9 L465.4,519.0 L468.0,523.2 L470.7,527.3 L473.3,531.4 L476.1,535.5 L478.9,539.5 L481.7,543.5 L484.6,547.6 L487.6,551.5 L490.6,555.5 L493.7,559.4 L496.8,563.4 L500.0,567.3 L503.2,571.2 L506.4,575.0 L509.7,578.9 L513.1,582.7 L516.4,586.6 L519.9,590.4 L523.4,594.2 L526.9,598.0 L530.5,601.8 L534.1,605.5 L537.8,609.3 L541.5,613.0 L545.3,616.7 L549.1,620.4 L553.0,624.0 L556.9,627.7 L560.9,631.3 L565.0,634.9 L569.1,638.5 L573.3,642.0 L577.5,645.5 L581.8,649.0 L586.1,652.5 L590.5,656.0 L594.9,659.5 L599.4,662.9 L603.9,666.3 L608.5,669.7 L613.2,673.1 L617.9,676.5 L622.6,679.9 L627.4,683.2 L632.2,686.5 L637.1,689.9 L642.1,693.2 L647.0,696.5 L652.0,699.8 L657.1,703.1 L662.1,706.4 L667.3,709.7 L672.5,713.0 L677.8,716.2 L683.1,719.4 L688.5,722.6 L694.0,725.7 L699.6,728.8 L705.2,731.9 L710.9,735.0 L716.6,738.0 L722.4,741.0 L728.3,743.9 L734.3,746.9 L740.3,749.8" fill="none" stroke="#800000" stroke-width="1" shape-rendering="crispEdges"/>
<path d="M494.4,3.5 L492.0,10.5 L489.6,17.4 L487.3,24.4 L485.1,31.3 L482.9,38.1 L480.7,44.9 L478.7,51.7 L476.6,58.5 L474.7,65.2 L472.7,71.9 L470.9,78.5 L469.1,85.1 L467.3,91.7 L465.6,98.3 L464.0,104.8 L462.4,111.3 L460.9,117.7 L459.4,124.1 L458.0,130.5 L456.6,136.8 L455.3,143.2 L454.0,149.4 L452.8,155.7 L451.7,161.9 L450.6,168.1 L449.5,174.2 L448.5,180.4 L447.6,186.4 L446.7,192.5 L445.9,198.5 L445.2,204.5 L444.4,210.5 L443.8,216.4 L443.2,222.3 L442.6,228.2 L442.2,234.0 L441.7,239.8 L441.3,245.6 L441.0,251.3 L440.7,257.0 L440.5,262.7 L440.4,268.4 L440.2,274.0 L440.2,279.6 L440.2,285.1 L440.2,290.7 L440.4,296.2 L440.5,301.6 L440.7,307.1 L441.0,312.5 L441.3,317.9 L441.7,323.2 L442.2,328.5 L442.7,333.8 L443.3,339.0 L443.9,344.2 L444.7,349.3 L445.5,354.4 L446.3,359.5 L447.2,364.5 L448.2,369.5 L449.3,374.4 L450.4,379.3 L451.5,384.2 L452.7,389.1 L454.0,393.9 L455.4,398.7 L456.8,403.5 L458.2,408.2 L459.7,412.9 L461.2,417.6 L462.8,422.3 L464.5,426.9 L466.2,431.5 L467.9,436.1 L469.7,440.7 L471.5,445.3 L473.4,449.9 L475.3,454.4 L477.3,458.9 L479.4,463.4 L481.5,467.8 L483.6,472.2 L485.9,476.6 L488.2,480.9 L490.5,485.3 L492.9,489.5 L495.3,493.8 L497.8,498.1 L500.4,502.3 L503.0,506.5 L505.6,510.7 L508.3,514.9 L511.1,519.0 L513.9,523.2 L516.7,527.3 L519.6,531.4 L522.6,535.5 L525.6,539.5 L528.6,543.5 L531.7,547.6 L534.9,551.5 L538.1,555.5 L541.4,559.4 L544.7,563.4 L548.1,567.3 L551.5,571.2 L555.0,575.0 L558.5,578.9 L562.1,582.7 L565.7,586.6 L569.3,590.4 L573.0,594.2 L576.8,598.0 L580.6,601.8 L584.4,605.5 L588.3,609.3 L592.3,613.0 L596.3,616.7 L600.3,620.4 L604.4,624.0 L608.6,627.7 L612.8,631.3 L617.1,634.9 L621.5,638.5 L625.9,642.0 L630.3,645.5 L634.8,649.0 L639.4,652.5 L644.0,656.0 L648.7,659.5 L653.4,662.9 L658.2,666.3 L663.0,669.7 L667.9,673.1 L672.8,676.5 L677.8,679.9 L682.9,683.2 L687.9,686.5 L693.1,689.9 L698.3,693.2 L703.5,696.5 L708.7,699.8 L714.0,703.1 L719.3,706.4 L724.7,709.7 L730.2,713.0 L735.7,716.2 L741.3,719.4 L747.0,722.6 L752.7,725.7 L758.5,728.8 L764.4,731.9 L770.4,735.0 L776.4,738.0 L782.5,741.0 L788.6,743.9 L794.8,746.9 L801.1,749.8" fill="none" stroke="#800000" stroke-width="1" shape-rendering="crispEdges"/>
<path d="M524.6,3.5 L522.3,10.5 L520.1,17.4 L517.9,24.4 L515.8,31.3 L513.7,38.1 L511.7,44.9 L509.8,51.7 L507.9,58.5 L506.0,65.2 L504.3,71.9 L502.5,78.5 L500.9,85.1 L499.3,91.7 L497.7,98.3 L496.2,104.8 L494.7,111.3 L493.4,117.7 L492.0,124.1 L490.7,130.5 L489.5,136.8 L488.4,143.2 L487.2,149.4 L486.2,155.7 L485.2,161.9 L484.2,168.1 L483.4,174.2 L482.5,180.4 L481.7,186.4 L481.0,192.5 L480.3,198.5 L479.7,204.5 L479.2,210.5 L478.7,216.4 L478.2,222.3 L477.8,228.2 L477.5,234.0 L477.2,239.8 L477.0,245.6 L476.8,251.3 L476.7,257.0 L476.7,262.7 L476.7,268.4 L476.7,274.0 L476.8,279.6 L477.0,285.1 L477.2,290.7 L477.5,296.2 L477.8,301.6 L478.2,307.1 L478.6,312.5 L479.1,317.9 L479.7,323.2 L480.3,328.5 L481.0,333.8 L481.7,339.0 L482.5,344.2 L483.4,349.3 L484.4,354.4 L485.4,359.5 L486.5,364.5 L487.7,369.5 L488.9,374.4 L490.2,379.3 L491.5,384.2 L492.9,389.1 L494.4,393.9 L495.9,398.7 L497.5,403.5 L499.1,408.2 L500.8,412.9 L502.5,417.6 L504.3,422.3 L506.1,426.9 L508.0,431.5 L509.9,436.1 L511.9,440.7 L513.9,445.3 L516.0,449.9 L518.1,454.4 L520.2,458.9 L522.5,463.4 L524.8,467.8 L527.1,472.2 L529.6,476.6 L532.0,480.9 L534.6,485.3 L537.2,489.5 L539.8,493.8 L542.5,498.1 L545.3,502.3 L548.1,506.5 L550.9,510.7 L553.8,514.9 L556.8,519.0 L559.8,523.2 L562.8,527.3 L565.9,531.4 L569.0,535.5 L572.3,539.5 L575.5,543.5 L578.8,547.6 L582.2,551.5 L585.6,555.5 L589.1,559.4 L592.7,563.4 L596.3,567.3 L599.9,571.2 L603.6,575.0 L607.3,578.9 L611.1,582.7 L614.9,586.6 L618.8,590.4 L622.7,594.2 L626.6,598.0 L630.7,601.8 L634.7,605.5 L638.9,609.3 L643.0,613.0 L647.3,616.7 L651.6,620.4 L655.9,624.0 L660.3,627.7 L664.7,631.3 L669.3,634.9 L673.8,638.5 L678.5,642.0 L683.2,645.5 L687.9,649.0 L692.7,652.5 L697.6,656.0 L702.5,659.5 L707.4,662.9 L712.4,666.3 L717.5,669.7 L722.6,673.1 L727.8,676.5 L733.0,679.9 L738.3,683.2 L743.6,686.5 L749.0,689.9 L754.4,693.2 L759.9,696.5 L765.4,699.8 L770.9,703.1 L776.5,706.4 L782.2,709.7 L787.9,713.0 L793.7,716.2 L799.5,719.4 L805.5,722.6 L811.5,725.7 L817.5,728.8 L823.7,731.9 L829.9,735.0 L836.2,738.0 L842.5,741.0 L848.9,743.9 L855.4,746.9 L862.0,749.8" fill="none" stroke="#800000" stroke-width="1" shape-rendering="crispEdges"/>
<path d="M554.7,3.5 L552.6,10.5 L550.5,17.4 L548.5,24.4 L546.5,31.3 L544.5,38.1 L542.7,44.9 L540.9,51.7 L539.1,58.5 L537.4,65.2 L535.8,71.9 L534.2,78.5 L532.7,85.1 L531.2,91.7 L529.8,98.3 L528.4,104.8 L527.1,111.3 L525.9,117.7 L524.7,124.1 L523.5,130.5 L522.5,136.8 L521.4,143.2 L520.5,149.4 L519.6,155.7 L518.7,161.9 L517.9,168.1 L517.2,174.2 L516.5,180.4 L515.9,186.4 L515.3,192.5 L514.8,198.5 L514.3,204.5 L513.9,210.5 L513.6,216.4 L513.3,222.3 L513.0,228.2 L512.9,234.0 L512.7,239.8 L512.7,245.6 L512.7,251.3 L512.7,257.0 L512.8,262.7 L513.0,268.4 L513.2,274.0 L513.4,279.6 L513.8,285.1 L514.1,290.7 L514.6,296.2 L515.1,301.6 L515.6,307.1 L516.2,312.5 L516.9,317.9 L517.6,323.2 L518.4,328.5 L519.2,333.8 L520.2,339.0 L521.2,344.2 L522.2,349.3 L523.4,354.4 L524.6,359.5 L525.8,364.5 L527.2,369.5 L528.6,374.4 L530.0,379.3 L531.5,384.2 L533.1,389.1 L534.7,393.9 L536.4,398.7 L538.2,403.5 L540.0,408.2 L541.8,412.9 L543.7,417.6 L545.7,422.3 L547.7,426.9 L549.8,431.5 L551.9,436.1 L554.1,440.7 L556.3,445.3 L558.5,449.9 L560.8,454.4 L563.2,458.9 L565.6,463.4 L568.1,467.8 L570.6,472.2 L573.3,476.6 L575.9,480.9 L578.7,485.3 L581.4,489.5 L584.3,493.8 L587.2,498.1 L590.1,502.3 L593.1,506.5 L596.2,510.7 L599.3,514.9 L602.4,519.0 L605.6,523.2 L608.9,527.3 L612.2,531.4 L615.5,535.5 L618.9,539.5 L622.4,543.5 L625.9,547.6 L629.5,551.5 L633.2,555.5 L636.9,559.4 L640.6,563.4 L644.4,567.3 L648.2,571.2 L652.1,575.0 L656.1,578.9 L660.1,582.7 L664.1,586.6 L668.2,590.4 L672.3,594.2 L676.5,598.0 L680.8,601.8 L685.1,605.5 L689.4,609.3 L693.8,613.0 L698.3,616.7 L702.8,620.4 L707.3,624.0 L712.0,627.7 L716.6,631.3 L721.4,634.9 L726.2,638.5 L731.1,642.0 L736.0,645.5 L741.0,649.0 L746.0,652.5 L751.1,656.0 L756.2,659.5 L761.4,662.9 L766.7,666.3 L772.0,669.7 L777.3,673.1 L782.8,676.5 L788.2,679.9 L793.8,683.2 L799.3,686.5 L805.0,689.9 L810.6,693.2 L816.4,696.5 L822.1,699.8 L827.9,703.1 L833.7,706.4 L839.6,709.7 L845.6,713.0 L851.6,716.2 L857.7,719.4 L863.9,722.6 L870.2,725.7 L876.5,728.8 L882.9,731.9 L889.4,735.0 L895.9,738.0 L902.5,741.0 L909.2,743.9 L916.0,746.9 L922.8,749.8" fill="none" stroke="#800000" stroke-width="1" shape-rendering="crispEdges"/>
<path d="M584.9,3.5 L582.9,10.5 L580.9,17.4 L579.0,24.4 L577.2,31.3 L575.4,38.1 L573.6,44.9 L572.0,51.7 L570.4,58.5 L568.8,65.2 L567.3,71.9 L565.8,78.5 L564.5,85.1 L563.1,91.7 L561.9,98.3 L560.6,104.8 L559.5,111.3 L558.4,117.7 L557.3,124.1 L556.3,130.5 L555.4,136.8 L554.5,143.2 L553.7,149.4 L552.9,155.7 L552.2,161.9 L551.6,168.1 L551.0,174.2 L550.5,180.4 L550.0,186.4 L549.6,192.5 L549.2,198.5 L548.9,204.5 L548.6,210.5 L548.4,216.4 L548.3,222.3 L548.2,228.2 L548.2,234.0 L548.2,239.8 L548.3,245.6 L548.5,251.3 L548.7,257.0 L548.9,262.7 L549.3,268.4 L549.6,274.0 L550.1,279.6 L550.5,285.1 L551.1,290.7 L551.7,296.2 L552.3,301.6 L553.1,307.1 L553.8,312.5 L554.6,317.9 L555.5,323.2 L556.5,328.5 L557.5,333.8 L558.6,339.0 L559.8,344.2 L561.0,349.3 L562.3,354.4 L563.7,359.5 L565.1,364.5 L566.6,369.5 L568.2,374.4 L569.8,379.3 L571.5,384.2 L573.3,389.1 L575.1,393.9 L577.0,398.7 L578.9,403.5 L580.9,408.2 L582.9,412.9 L585.0,417.6 L587.2,422.3 L589.3,426.9 L591.6,431.5 L593.9,436.1 L596.2,440.7 L598.6,445.3 L601.1,449.9 L603.5,454.4 L606.1,458.9 L608.7,463.4 L611.4,467.8 L614.1,472.2 L617.0,476.6 L619.8,480.9 L622.7,485.3 L625.7,489.5 L628.8,493.8 L631.8,498.1 L635.0,502.3 L638.2,506.5 L641.4,510.7 L644.7,514.9 L648.1,519.0 L651.5,523.2 L654.9,527.3 L658.4,531.4 L662.0,535.5 L665.6,539.5 L669.3,543.5 L673.0,547.6 L676.8,551.5 L680.7,555.5 L684.6,559.4 L688.5,563.4 L692.6,567.3 L696.6,571.2 L700.7,575.0 L704.9,578.9 L709.1,582.7 L713.3,586.6 L717.6,590.4 L722.0,594.2 L726.4,598.0 L730.9,601.8 L735.4,605.5 L740.0,609.3 L744.6,613.0 L749.3,616.7 L754.0,620.4 L758.8,624.0 L763.6,627.7 L768.6,631.3 L773.5,634.9 L778.6,638.5 L783.7,642.0 L788.8,645.5 L794.0,649.0 L799.3,652.5 L804.6,656.0 L810.0,659.5 L815.4,662.9 L820.9,666.3 L826.5,669.7 L832.1,673.1 L837.7,676.5 L843.5,679.9 L849.2,683.2 L855.0,686.5 L860.9,689.9 L866.8,693.2 L872.8,696.5 L878.8,699.8 L884.8,703.1 L890.9,706.4 L897.1,709.7 L903.3,713.0 L909.6,716.2 L916.0,719.4 L922.4,722.6 L928.9,725.7 L935.5,728.8 L942.2,731.9 L948.9,735.0 L955.7,738.0 L962.6,741.0 L969.5,743.9 L976.5,746.9 L983.6,749.8" fill="none" stroke="#800000" stroke-width="1" shape-rendering="crispEdges"/>
<path d="M70.8,749.8 L69.7,748.7 L68.6,747.6 L67.4,746.5 L66.3,745.4 L65.2,744.3 L64.1,743.2 L63.0,742.0 L61.9,740.9 L60.8,739.7 L59.6,738.6 L58.5,737.4 L57.4,736.2 L56.3,735.0 L55.2,733.7 L54.1,732.5 L53.0,731.3 L51.9,730.0 L50.8,728.7 L49.7,727.5 L48.6,726.2 L47.5,724.9 L46.4,723.5 L45.3,722.2 L44.2,720.9 L43.1,719.5 L42.0,718.1 L40.9,716.7 L39.8,715.3 L38.8,713.9 L37.7,712.4 L36.6,711.0 L35.6,709.5 L34.5,708.0 L33.4,706.5 L32.4,705.0 L31.3,703.4 L30.3,701.9 L29.2,700.3 L28.1,698.8 L27.1,697.2 L26.0,695.6 L24.9,694.0 L23.9,692.3 L22.8,690.7 L21.7,689.1 L20.6,687.4 L19.5,685.7 L18.5,684.0 L17.4,682.3 L16.3,680.6 L15.2,678.9 L14.1,677.1 L13.1,675.3 L12.0,673.5 L10.9,671.7 L9.8,669.9 L8.8,668.0 L7.7,666.1 L6.7,664.2 L5.6,662.3 L4.6,660.4 L3.5,658.4 L2.5,656.4 L1.4,654.4 L0.4,652.3 L-0.7,650.3 L-1.7,648.2 L-2.7,646.1 L-3.7,644.0 L-4.7,641.8 L-5.7,639.6 L-6.7,637.4 L-7.7,635.1 L-8.7,632.8 L-9.7,630.5 L-10.6,628.1 L-11.6,625.8 L-12.5,623.3 L-13.5,620.9 L-14.4,618.4 L-15.3,615.9 L-16.2,613.3 L-17.1,610.7 L-18.0,608.1 L-18.8,605.4 L-19.7,602.7 L-20.6,599.9 L-21.4,597.1 L-22.2,594.3 L-23.0,591.4 L-23.8,588.5 L-24.6,585.5 L-25.4,582.5 L-26.2,579.4 L-26.9,576.3 L-27.7,573.2 L-28.4,570.0 L-29.1,566.7 L-29.8,563.4 L-30.5,560.1 L-31.2,556.7 L-31.8,553.2 L-32.4,549.6 L-33.0,546.0 L-33.6,542.3 L-34.1,538.6 L-34.6,534.7 L-35.0,530.8 L-35.5,526.8 L-35.9,522.8 L-36.2,518.6 L-36.6,514.4 L-36.9,510.0 L-37.1,505.6 L-37.4,501.1 L-37.5,496.5 L-37.7,491.8 L-37.8,487.0 L-37.8,482.0 L-37.7,477.0 L-37.6,471.8 L-37.5,466.4 L-37.2,460.9 L-36.9,455.3 L-36.5,449.5 L-36.0,443.5 L-35.4,437.4 L-34.7,431.1 L-34.0,424.7 L-33.2,418.1 L-32.2,411.2 L-31.2,404.2 L-30.0,397.0 L-28.7,389.4 L-27.3,381.7 L-25.6,373.6 L-23.8,365.3 L-21.8,356.6 L-19.6,347.6 L-17.1,338.2 L-14.3,328.3 L-11.2,318.0 L-7.8,307.3" fill="none" stroke="#000088" stroke-width="1" shape-rendering="crispEdges"/>
<path d="M131.3,749.8 L130.1,748.7 L129.0,747.6 L127.8,746.5 L126.6,745.4 L125.4,744.3 L124.3,743.2 L123.1,742.0 L121.9,740.9 L120.7,739.7 L119.5,738.6 L118.4,737.4 L117.2,736.2 L116.0,735.0 L114.8,733.7 L113.6,732.5 L112.4,731.3 L111.3,730.0 L110.1,728.7 L108.9,727.5 L107.7,726.2 L106.5,724.9 L105.3,723.5 L104.2,722.2 L103.0,720.9 L101.8,719.5 L100.6,718.1 L99.5,716.7 L98.3,715.3 L97.1,713.9 L96.0,712.4 L94.8,711.0 L93.6,709.5 L92.5,708.0 L91.3,706.5 L90.1,705.0 L89.0,703.4 L87.8,701.9 L86.7,700.3 L85.5,698.8 L84.3,697.2 L83.1,695.6 L82.0,694.0 L80.8,692.3 L79.6,690.7 L78.4,689.1 L77.2,687.4 L76.0,685.7 L74.8,684.0 L73.6,682.3 L72.4,680.6 L71.2,678.9 L70.0,677.1 L68.8,675.3 L67.6,673.5 L66.4,671.7 L65.2,669.9 L64.0,668.0 L62.9,666.1 L61.7,664.2 L60.5,662.3 L59.3,660.4 L58.1,658.4 L56.9,656.4 L55.8,654.4 L54.6,652.3 L53.4,650.3 L52.3,648.2 L51.1,646.1 L49.9,644.0 L48.8,641.8 L47.6,639.6 L46.5,637.4 L45.4,635.1 L44.2,632.8 L43.1,630.5 L42.0,628.1 L40.9,625.8 L39.8,623.3 L38.7,620.9 L37.7,618.4 L36.6,615.9 L35.5,613.3 L34.5,610.7 L33.4,608.1 L32.4,605.4 L31.4,602.7 L30.4,599.9 L29.4,597.1 L28.4,594.3 L27.4,591.4 L26.4,588.5 L25.5,585.5 L24.5,582.5 L23.6,579.4 L22.6,576.3 L21.7,573.2 L20.8,570.0 L19.9,566.7 L19.0,563.4 L18.2,560.1 L17.3,556.7 L16.5,553.2 L15.7,549.6 L14.9,546.0 L14.2,542.3 L13.4,538.6 L12.8,534.7 L12.1,530.8 L11.5,526.8 L10.9,522.8 L10.3,518.6 L9.8,514.4 L9.2,510.0 L8.8,505.6 L8.3,501.1 L7.9,496.5 L7.6,491.8 L7.3,487.0 L7.0,482.0 L6.8,477.0 L6.7,471.8 L6.6,466.4 L6.6,460.9 L6.7,455.3 L6.9,449.5 L7.1,443.5 L7.5,437.4 L7.9,431.1 L8.3,424.7 L8.9,418.1 L9.6,411.2 L10.3,404.2 L11.2,397.0 L12.2,389.4 L13.4,381.7 L14.7,373.6 L16.3,365.3 L18.0,356.6 L19.9,347.6 L22.1,338.2 L24.5,328.3 L27.3,318.0 L30.3,307.3 L33.6,296.1 L37.3,284.4 L41.3,272.1 L45.6,259.3 L50.4,245.8" fill="none" stroke="#000088" stroke-width="1" shape-rendering="crispEdges"/>
<path d="M191.4,749.8 L190.2,748.7 L189.0,747.6 L187.9,746.5 L186.7,745.4 L185.5,744.3 L184.3,743.2 L183.1,742.0 L181.9,740.9 L180.7,739.7 L179.5,738.6 L178.3,737.4 L177.1,736.2 L175.9,735.0 L174.7,733.7 L173.4,732.5 L172.2,731.3 L171.0,730.0 L169.8,728.7 L168.6,727.5 L167.3,726.2 L166.1,724.9 L164.9,723.5 L163.6,722.2 L162.4,720.9 L161.2,719.5 L159.9,718.1 L158.7,716.7 L157.5,715.3 L156.3,713.9 L155.0,712.4 L153.8,711.0 L152.6,709.5 L151.3,708.0 L150.1,706.5 L148.9,705.0 L147.6,703.4 L146.4,701.9 L145.1,700.3 L143.9,698.8 L142.6,697.2 L141.4,695.6 L140.1,694.0 L138.8,692.3 L137.5,690.7 L136.3,689.1 L135.0,687.4 L133.7,685.7 L132.4,684.0 L131.1,682.3 L129.8,680.6 L128.5,678.9 L127.2,677.1 L125.9,675.3 L124.6,673.5 L123.3,671.7 L122.0,669.9 L120.7,668.0 L119.3,666.1 L118.0,664.2 L116.7,662.3 L115.4,660.4 L114.1,658.4 L112.8,656.4 L111.5,654.4 L110.2,652.3 L108.9,650.3 L107.6,648.2 L106.3,646.1 L105.0,644.0 L103.8,641.8 L102.5,639.6 L101.2,637.4 L99.9,635.1 L98.6,632.8 L97.4,630.5 L96.1,628.1 L94.9,625.8 L93.6,623.3 L92.4,620.9 L91.2,618.4 L89.9,615.9 L88.7,613.3 L87.5,610.7 L86.3,608.1 L85.1,605.4 L83.9,602.7 L82.8,599.9 L81.6,597.1 L80.4,594.3 L79.3,591.4 L78.1,588.5 L77.0,585.5 L75.9,582.5 L74.8,579.4 L73.6,576.3 L72.5,573.2 L71.5,570.0 L70.4,566.7 L69.3,563.4 L68.3,560.1 L67.2,556.7 L66.2,553.2 L65.2,549.6 L64.2,546.0 L63.3,542.3 L62.4,538.6 L61.5,534.7 L60.6,530.8 L59.8,526.8 L59.0,522.8 L58.2,518.6 L57.4,514.4 L56.7,510.0 L56.0,505.6 L55.3,501.1 L54.7,496.5 L54.1,491.8 L53.6,487.0 L53.1,482.0 L52.7,477.0 L52.3,471.8 L52.0,466.4 L51.8,460.9 L51.6,455.3 L51.5,449.5 L51.5,443.5 L51.6,437.4 L51.7,431.1 L51.9,424.7 L52.2,418.1 L52.6,411.2 L53.1,404.2 L53.7,397.0 L54.4,389.4 L55.3,381.7 L56.3,373.6 L57.5,365.3 L58.9,356.6 L60.6,347.6 L62.4,338.2 L64.5,328.3 L66.9,318.0 L69.6,307.3 L72.6,296.1 L75.9,284.4 L79.5,272.1 L83.4,259.3 L87.8,245.8 L92.6,231.7 L98.0,216.8 L103.8,201.0 L110.3,184.4" fill="none" stroke="#000088" stroke-width="1" shape-rendering="crispEdges"/>
<path d="M250.8,749.8 L249.7,748.7 L248.6,747.6 L247.5,746.5 L246.4,745.4 L245.3,744.3 L244.1,743.2 L243.0,742.0 L241.9,740.9 L240.7,739.7 L239.6,738.6 L238.4,737.4 L237.3,736.2 L236.1,735.0 L235.0,733.7 L233.8,732.5 L232.6,731.3 L231.4,730.0 L230.2,728.7 L229.0,727.5 L227.8,726.2 L226.6,724.9 L225.4,723.5 L224.2,722.2 L223.0,720.9 L221.8,719.5 L220.6,718.1 L219.3,716.7 L218.1,715.3 L216.9,713.9 L215.7,712.4 L214.4,711.0 L213.2,709.5 L212.0,708.0 L210.7,706.5 L209.5,705.0 L208.2,703.4 L206.9,701.9 L205.7,700.3 L204.4,698.8 L203.1,697.2 L201.8,695.6 L200.5,694.0 L199.2,692.3 L197.8,690.7 L196.5,689.1 L195.2,687.4 L193.8,685.7 L192.5,684.0 L191.1,682.3 L189.8,680.6 L188.4,678.9 L187.0,677.1 L185.6,675.3 L184.2,673.5 L182.9,671.7 L181.5,669.9 L180.1,668.0 L178.7,666.1 L177.3,664.2 L175.9,662.3 L174.5,660.4 L173.1,658.4 L171.7,656.4 L170.3,654.4 L168.9,652.3 L167.5,650.3 L166.1,648.2 L164.7,646.1 L163.2,644.0 L161.8,641.8 L160.4,639.6 L159.0,637.4 L157.6,635.1 L156.2,632.8 L154.8,630.5 L153.4,628.1 L152.0,625.8 L150.6,623.3 L149.3,620.9 L147.9,618.4 L146.5,615.9 L145.1,613.3 L143.8,610.7 L142.4,608.1 L141.1,605.4 L139.7,602.7 L138.4,599.9 L137.0,597.1 L135.7,594.3 L134.4,591.4 L133.1,588.5 L131.8,585.5 L130.5,582.5 L129.2,579.4 L127.9,576.3 L126.6,573.2 L125.3,570.0 L124.0,566.7 L122.8,563.4 L121.5,560.1 L120.3,556.7 L119.1,553.2 L117.9,549.6 L116.7,546.0 L115.5,542.3 L114.4,538.6 L113.3,534.7 L112.2,530.8 L111.2,526.8 L110.1,522.8 L109.1,518.6 L108.2,514.4 L107.2,510.0 L106.3,505.6 L105.4,501.1 L104.5,496.5 L103.7,491.8 L102.9,487.0 L102.2,482.0 L101.5,477.0 L100.9,471.8 L100.3,466.4 L99.8,460.9 L99.4,455.3 L99.0,449.5 L98.7,443.5 L98.5,437.4 L98.4,431.1 L98.3,424.7 L98.3,418.1 L98.4,411.2 L98.6,404.2 L98.9,397.0 L99.3,389.4 L99.9,381.7 L100.6,373.6 L101.5,365.3 L102.5,356.6 L103.8,347.6 L105.3,338.2 L107.1,328.3 L109.1,318.0 L111.4,307.3 L114.0,296.1 L116.9,284.4 L120.1,272.1 L123.7,259.3 L127.7,245.8 L132.1,231.7 L136.9,216.8 L142.4,201.0 L148.4,184.4 L155.0,166.8 L162.4,148.0 L170.7,128.1" fill="none" stroke="#000088" stroke-width="1" shape-rendering="crispEdges"/>
<path d="M309.4,749.8 L308.5,748.7 L307.5,747.6 L306.6,746.5 L305.7,745.4 L304.7,744.3 L303.8,743.2 L302.8,742.0 L301.8,740.9 L300.8,739.7 L299.9,738.6 L298.9,737.4 L297.9,736.2 L296.9,735.0 L295.9,733.7 L294.8,732.5 L293.8,731.3 L292.8,730.0 L291.7,728.7 L290.7,727.5 L289.6,726.2 L288.6,724.9 L287.5,723.5 L286.4,722.2 L285.4,720.9 L284.3,719.5 L283.2,718.1 L282.1,716.7 L281.0,715.3 L279.9,713.9 L278.7,712.4 L277.6,711.0 L276.5,709.5 L275.3,708.0 L274.2,706.5 L273.0,705.0 L271.9,703.4 L270.7,701.9 L269.5,700.3 L268.3,698.8 L267.1,697.2 L265.9,695.6 L264.6,694.0 L263.4,692.3 L262.1,690.7 L260.8,689.1 L259.5,687.4 L258.2,685.7 L256.9,684.0 L255.6,682.3 L254.3,680.6 L252.9,678.9 L251.6,677.1 L250.2,675.3 L248.8,673.5 L247.4,671.7 L246.0,669.9 L244.7,668.0 L243.3,666.1 L241.8,664.2 L240.4,662.3 L239.0,660.4 L237.6,658.4 L236.1,656.4 L234.7,654.4 L233.2,652.3 L231.8,650.3 L230.3,648.2 L228.8,646.1 L227.3,644.0 L225.9,641.8 L224.4,639.6 L222.9,637.4 L221.4,635.1 L219.9,632.8 L218.4,630.5 L216.9,628.1 L215.4,625.8 L213.9,623.3 L212.4,620.9 L210.9,618.4 L209.5,615.9 L208.0,613.3 L206.5,610.7 L205.0,608.1 L203.5,605.4 L202.0,602.7 L200.5,599.9 L199.0,597.1 L197.5,594.3 L196.0,591.4 L194.5,588.5 L193.1,585.5 L191.6,582.5 L190.1,579.4 L188.6,576.3 L187.1,573.2 L185.7,570.0 L184.2,566.7 L182.7,563.4 L181.3,560.1 L179.9,556.7 L178.4,553.2 L177.0,549.6 L175.6,546.0 L174.2,542.3 L172.9,538.6 L171.6,534.7 L170.2,530.8 L169.0,526.8 L167.7,522.8 L166.4,518.6 L165.2,514.4 L164.0,510.0 L162.8,505.6 L161.6,501.1 L160.5,496.5 L159.4,491.8 L158.4,487.0 L157.4,482.0 L156.4,477.0 L155.5,471.8 L154.6,466.4 L153.9,460.9 L153.1,455.3 L152.5,449.5 L151.9,443.5 L151.4,437.4 L150.9,431.1 L150.5,424.7 L150.2,418.1 L150.0,411.2 L149.8,404.2 L149.8,397.0 L149.8,389.4 L150.0,381.7 L150.4,373.6 L150.9,365.3 L151.6,356.6 L152.5,347.6 L153.6,338.2 L155.0,328.3 L156.6,318.0 L158.5,307.3 L160.7,296.1 L163.1,284.4 L165.9,272.1 L169.0,259.3 L172.5,245.8 L176.4,231.7 L180.8,216.8 L185.7,201.0 L191.2,184.4 L197.3,166.8 L204.2,148.0 L211.8,128.1 L220.5,106.7 L230.1,83.8 L241.0,59.2" fill="none" stroke="#000088" stroke-width="1" shape-rendering="crispEdges"/>
<path d="M367.3,749.8 L366.6,748.7 L365.9,747.6 L365.2,746.5 L364.6,745.4 L363.9,744.3 L363.2,743.2 L362.4,742.0 L361.7,740.9 L361.0,739.7 L360.3,738.6 L359.6,737.4 L358.8,736.2 L358.1,735.0 L357.3,733.7 L356.6,732.5 L355.8,731.3 L355.1,730.0 L354.3,728.7 L353.5,727.5 L352.7,726.2 L351.9,724.9 L351.1,723.5 L350.3,722.2 L349.5,720.9 L348.7,719.5 L347.8,718.1 L347.0,716.7 L346.2,715.3 L345.3,713.9 L344.5,712.4 L343.6,711.0 L342.7,709.5 L341.9,708.0 L341.0,706.5 L340.1,705.0 L339.2,703.4 L338.2,701.9 L337.3,700.3 L336.4,698.8 L335.4,697.2 L334.4,695.6 L333.4,694.0 L332.4,692.3 L331.4,690.7 L330.3,689.1 L329.3,687.4 L328.2,685.7 L327.1,684.0 L326.0,682.3 L324.9,680.6 L323.7,678.9 L322.6,677.1 L321.4,675.3 L320.2,673.5 L319.0,671.7 L317.8,669.9 L316.6,668.0 L315.4,666.1 L314.1,664.2 L312.9,662.3 L311.6,660.4 L310.3,658.4 L309.0,656.4 L307.7,654.4 L306.4,652.3 L305.0,650.3 L303.7,648.2 L302.3,646.1 L300.9,644.0 L299.5,641.8 L298.1,639.6 L296.7,637.4 L295.3,635.1 L293.8,632.8 L292.4,630.5 L290.9,628.1 L289.5,625.8 L288.0,623.3 L286.5,620.9 L285.0,618.4 L283.5,615.9 L282.0,613.3 L280.4,610.7 L278.9,608.1 L277.4,605.4 L275.8,602.7 L274.3,599.9 L272.7,597.1 L271.1,594.3 L269.5,591.4 L268.0,588.5 L266.4,585.5 L264.8,582.5 L263.2,579.4 L261.5,576.3 L259.9,573.2 L258.3,570.0 L256.7,566.7 L255.0,563.4 L253.4,560.1 L251.8,556.7 L250.2,553.2 L248.5,549.6 L246.9,546.0 L245.3,542.3 L243.7,538.6 L242.2,534.7 L240.6,530.8 L239.1,526.8 L237.6,522.8 L236.0,518.6 L234.5,514.4 L233.0,510.0 L231.6,505.6 L230.1,501.1 L228.7,496.5 L227.3,491.8 L225.9,487.0 L224.6,482.0 L223.3,477.0 L222.1,471.8 L220.9,466.4 L219.8,460.9 L218.7,455.3 L217.7,449.5 L216.7,443.5 L215.8,437.4 L215.0,431.1 L214.2,424.7 L213.5,418.1 L212.9,411.2 L212.3,404.2 L211.9,397.0 L211.5,389.4 L211.3,381.7 L211.2,373.6 L211.3,365.3 L211.5,356.6 L211.9,347.6 L212.6,338.2 L213.5,328.3 L214.6,318.0 L216.0,307.3 L217.6,296.1 L219.6,284.4 L221.8,272.1 L224.4,259.3 L227.3,245.8 L230.6,231.7 L234.4,216.8 L238.7,201.0 L243.5,184.4 L249.0,166.8 L255.1,148.0 L262.1,128.1 L270.0,106.7 L278.9,83.8 L289.0,59.2 L300.5,32.5 L313.6,3.5" fill="none" stroke="#000088" stroke-width="1" shape-rendering="crispEdges"/>
<path d="M424.9,749.8 L424.5,748.7 L424.1,747.6 L423.7,746.5 L423.3,745.4 L422.9,744.3 L422.5,743.2 L422.1,742.0 L421.6,740.9 L421.2,739.7 L420.8,738.6 L420.4,737.4 L419.9,736.2 L419.5,735.0 L419.1,733.7 L418.6,732.5 L418.2,731.3 L417.7,730.0 L417.3,728.7 L416.8,727.5 L416.4,726.2 L415.9,724.9 L415.5,723.5 L415.0,722.2 L414.5,720.9 L414.1,719.5 L413.6,718.1 L413.1,716.7 L412.7,715.3 L412.2,713.9 L411.7,712.4 L411.2,711.0 L410.7,709.5 L410.2,708.0 L409.7,706.5 L409.2,705.0 L408.7,703.4 L408.2,701.9 L407.6,700.3 L407.1,698.8 L406.5,697.2 L406.0,695.6 L405.4,694.0 L404.8,692.3 L404.2,690.7 L403.5,689.1 L402.9,687.4 L402.2,685.7 L401.6,684.0 L400.9,682.3 L400.2,680.6 L399.5,678.9 L398.8,677.1 L398.1,675.3 L397.4,673.5 L396.6,671.7 L395.8,669.9 L395.1,668.0 L394.3,666.1 L393.5,664.2 L392.7,662.3 L391.9,660.4 L391.0,658.4 L390.2,656.4 L389.3,654.4 L388.4,652.3 L387.5,650.3 L386.6,648.2 L385.6,646.1 L384.7,644.0 L383.7,641.8 L382.7,639.6 L381.7,637.4 L380.7,635.1 L379.6,632.8 L378.6,630.5 L377.5,628.1 L376.4,625.8 L375.3,623.3 L374.2,620.9 L373.0,618.4 L371.9,615.9 L370.7,613.3 L369.5,610.7 L368.3,608.1 L367.0,605.4 L365.7,602.7 L364.5,599.9 L363.1,597.1 L361.8,594.3 L360.5,591.4 L359.1,588.5 L357.7,585.5 L356.3,582.5 L354.8,579.4 L353.3,576.3 L351.8,573.2 L350.3,570.0 L348.8,566.7 L347.2,563.4 L345.6,560.1 L344.0,556.7 L342.4,553.2 L340.8,549.6 L339.2,546.0 L337.5,542.3 L335.9,538.6 L334.2,534.7 L332.5,530.8 L330.9,526.8 L329.2,522.8 L327.5,518.6 L325.8,514.4 L324.1,510.0 L322.4,505.6 L320.7,501.1 L319.1,496.5 L317.4,491.8 L315.7,487.0 L314.1,482.0 L312.5,477.0 L310.9,471.8 L309.3,466.4 L307.8,460.9 L306.3,455.3 L304.9,449.5 L303.5,443.5 L302.2,437.4 L300.9,431.1 L299.6,424.7 L298.4,418.1 L297.3,411.2 L296.2,404.2 L295.2,397.0 L294.4,389.4 L293.6,381.7 L292.9,373.6 L292.4,365.3 L292.0,356.6 L291.8,347.6 L291.9,338.2 L292.1,328.3 L292.6,318.0 L293.3,307.3 L294.3,296.1 L295.5,284.4 L297.0,272.1 L298.8,259.3 L300.9,245.8 L303.5,231.7 L306.5,216.8 L309.9,201.0 L313.9,184.4 L318.5,166.8 L323.7,148.0 L329.7,128.1 L336.6,106.7 L344.5,83.8 L353.6,59.2 L363.9,32.5 L375.9,3.5" fill="none" stroke="#000088" stroke-width="1" shape-rendering="crispEdges"/>
<path d="M482.9,749.8 L482.7,748.7 L482.5,747.6 L482.4,746.5 L482.2,745.4 L482.0,744.3 L481.9,743.2 L481.7,742.0 L481.6,740.9 L481.4,739.7 L481.2,738.6 L481.1,737.4 L480.9,736.2 L480.8,735.0 L480.6,733.7 L480.5,732.5 L480.3,731.3 L480.2,730.0 L480.0,728.7 L479.9,727.5 L479.7,726.2 L479.6,724.9 L479.5,723.5 L479.3,722.2 L479.2,720.9 L479.0,719.5 L478.9,718.1 L478.8,716.7 L478.7,715.3 L478.5,713.9 L478.4,712.4 L478.3,711.0 L478.2,709.5 L478.1,708.0 L477.9,706.5 L477.8,705.0 L477.7,703.4 L477.6,701.9 L477.4,700.3 L477.3,698.8 L477.2,697.2 L477.0,695.6 L476.9,694.0 L476.7,692.3 L476.6,690.7 L476.4,689.1 L476.2,687.4 L476.1,685.7 L475.9,684.0 L475.7,682.3 L475.5,680.6 L475.3,678.9 L475.1,677.1 L474.9,675.3 L474.7,673.5 L474.5,671.7 L474.3,669.9 L474.1,668.0 L473.9,666.1 L473.7,664.2 L473.4,662.3 L473.2,660.4 L473.0,658.4 L472.7,656.4 L472.5,654.4 L472.2,652.3 L472.0,650.3 L471.7,648.2 L471.4,646.1 L471.1,644.0 L470.9,641.8 L470.6,639.6 L470.3,637.4 L470.0,635.1 L469.7,632.8 L469.4,630.5 L469.0,628.1 L468.7,625.8 L468.4,623.3 L468.0,620.9 L467.7,618.4 L467.3,615.9 L466.9,613.3 L466.5,610.7 L466.1,608.1 L465.7,605.4 L465.3,602.7 L464.8,599.9 L464.4,597.1 L463.9,594.3 L463.4,591.4 L462.9,588.5 L462.4,585.5 L461.8,582.5 L461.2,579.4 L460.6,576.3 L460.0,573.2 L459.3,570.0 L458.6,566.7 L457.9,563.4 L457.2,560.1 L456.4,556.7 L455.6,553.2 L454.8,549.6 L453.9,546.0 L453.1,542.3 L452.1,538.6 L451.2,534.7 L450.3,530.8 L449.3,526.8 L448.2,522.8 L447.2,518.6 L446.1,514.4 L444.9,510.0 L443.7,505.6 L442.5,501.1 L441.3,496.5 L440.0,491.8 L438.7,487.0 L437.3,482.0 L435.9,477.0 L434.5,471.8 L433.1,466.4 L431.7,460.9 L430.3,455.3 L428.8,449.5 L427.4,443.5 L425.9,437.4 L424.4,431.1 L422.9,424.7 L421.4,418.1 L419.9,411.2 L418.5,404.2 L417.0,397.0 L415.6,389.4 L414.3,381.7 L413.0,373.6 L411.8,365.3 L410.8,356.6 L409.9,347.6 L409.1,338.2 L408.5,328.3 L408.1,318.0 L407.9,307.3 L407.9,296.1 L408.2,284.4 L408.6,272.1 L409.4,259.3 L410.4,245.8 L411.8,231.7 L413.6,216.8 L415.8,201.0 L418.6,184.4 L421.8,166.8 L425.7,148.0 L430.3,128.1 L435.8,106.7 L442.2,83.8 L449.6,59.2 L458.4,32.5 L468.6,3.5" fill="none" stroke="#000088" stroke-width="1" shape-rendering="crispEdges"/>
<path d="M541.3,749.8 L541.3,748.7 L541.3,747.6 L541.3,746.5 L541.4,745.4 L541.4,744.3 L541.4,743.2 L541.5,742.0 L541.5,740.9 L541.5,739.7 L541.6,738.6 L541.6,737.4 L541.7,736.2 L541.7,735.0 L541.8,733.7 L541.9,732.5 L541.9,731.3 L542.0,730.0 L542.1,728.7 L542.2,727.5 L542.2,726.2 L542.3,724.9 L542.4,723.5 L542.5,722.2 L542.6,720.9 L542.7,719.5 L542.9,718.1 L543.0,716.7 L543.1,715.3 L543.3,713.9 L543.4,712.4 L543.6,711.0 L543.7,709.5 L543.9,708.0 L544.1,706.5 L544.2,705.0 L544.4,703.4 L544.6,701.9 L544.8,700.3 L544.9,698.8 L545.1,697.2 L545.3,695.6 L545.5,694.0 L545.7,692.3 L545.8,690.7 L546.0,689.1 L546.2,687.4 L546.4,685.7 L546.6,684.0 L546.8,682.3 L546.9,680.6 L547.1,678.9 L547.3,677.1 L547.5,675.3 L547.7,673.5 L547.9,671.7 L548.2,669.9 L548.4,668.0 L548.6,666.1 L548.8,664.2 L549.1,662.3 L549.3,660.4 L549.6,658.4 L549.8,656.4 L550.1,654.4 L550.3,652.3 L550.6,650.3 L550.8,648.2 L551.1,646.1 L551.4,644.0 L551.7,641.8 L552.0,639.6 L552.3,637.4 L552.6,635.1 L552.9,632.8 L553.2,630.5 L553.5,628.1 L553.9,625.8 L554.2,623.3 L554.6,620.9 L554.9,618.4 L555.3,615.9 L555.7,613.3 L556.1,610.7 L556.5,608.1 L556.9,605.4 L557.3,602.7 L557.7,599.9 L558.1,597.1 L558.5,594.3 L559.0,591.4 L559.4,588.5 L559.9,585.5 L560.3,582.5 L560.8,579.4 L561.2,576.3 L561.7,573.2 L562.1,570.0 L562.6,566.7 L563.0,563.4 L563.5,560.1 L564.0,556.7 L564.5,553.2 L565.0,549.6 L565.5,546.0 L566.0,542.3 L566.5,538.6 L567.0,534.7 L567.5,530.8 L568.1,526.8 L568.6,522.8 L569.2,518.6 L569.7,514.4 L570.3,510.0 L570.8,505.6 L571.4,501.1 L571.9,496.5 L572.4,491.8 L573.0,487.0 L573.5,482.0 L574.1,477.0 L574.6,471.8 L575.2,466.4 L575.7,460.9 L576.3,455.3 L576.9,449.5 L577.4,443.5 L578.0,437.4 L578.5,431.1 L578.9,424.7 L579.4,418.1 L579.8,411.2 L580.1,404.2 L580.5,397.0 L580.8,389.4 L581.1,381.7 L581.4,373.6 L581.6,365.3 L581.8,356.6 L582.0,347.6 L582.3,338.2 L582.5,328.3 L582.8,318.0 L583.0,307.3 L583.3,296.1 L583.6,284.4 L583.9,272.1 L584.3,259.3 L584.7,245.8 L585.3,231.7 L586.1,216.8 L587.1,201.0 L588.4,184.4 L590.0,166.8 L592.1,148.0 L594.8,128.1 L598.1,106.7 L602.2,83.8 L607.2,59.2 L613.3,32.5 L620.8,3.5" fill="none" stroke="#000088" stroke-width="1" shape-rendering="crispEdges"/>
<path d="M600.3,749.8 L600.4,748.7 L600.5,747.6 L600.7,746.5 L600.8,745.4 L601.0,744.3 L601.1,743.2 L601.3,742.0 L601.4,740.9 L601.6,739.7 L601.8,738.6 L602.0,737.4 L602.2,736.2 L602.3,735.0 L602.5,733.7 L602.7,732.5 L603.0,731.3 L603.2,730.0 L603.4,728.7 L603.6,727.5 L603.9,726.2 L604.1,724.9 L604.3,723.5 L604.6,722.2 L604.9,720.9 L605.1,719.5 L605.4,718.1 L605.7,716.7 L606.0,715.3 L606.3,713.9 L606.6,712.4 L606.9,711.0 L607.3,709.5 L607.6,708.0 L608.0,706.5 L608.3,705.0 L608.7,703.4 L609.0,701.9 L609.4,700.3 L609.8,698.8 L610.2,697.2 L610.5,695.6 L610.9,694.0 L611.3,692.3 L611.7,690.7 L612.1,689.1 L612.5,687.4 L612.9,685.7 L613.3,684.0 L613.7,682.3 L614.1,680.6 L614.5,678.9 L615.0,677.1 L615.4,675.3 L615.9,673.5 L616.3,671.7 L616.8,669.9 L617.3,668.0 L617.7,666.1 L618.2,664.2 L618.7,662.3 L619.3,660.4 L619.8,658.4 L620.3,656.4 L620.9,654.4 L621.4,652.3 L622.0,650.3 L622.6,648.2 L623.2,646.1 L623.8,644.0 L624.4,641.8 L625.0,639.6 L625.6,637.4 L626.3,635.1 L627.0,632.8 L627.7,630.5 L628.4,628.1 L629.1,625.8 L629.8,623.3 L630.6,620.9 L631.4,618.4 L632.1,615.9 L632.9,613.3 L633.8,610.7 L634.6,608.1 L635.5,605.4 L636.4,602.7 L637.3,599.9 L638.2,597.1 L639.1,594.3 L640.1,591.4 L641.0,588.5 L642.0,585.5 L643.0,582.5 L644.1,579.4 L645.1,576.3 L646.2,573.2 L647.3,570.0 L648.4,566.7 L649.5,563.4 L650.7,560.1 L651.9,556.7 L653.1,553.2 L654.4,549.6 L655.6,546.0 L657.0,542.3 L658.3,538.6 L659.7,534.7 L661.2,530.8 L662.6,526.8 L664.2,522.8 L665.7,518.6 L667.3,514.4 L668.9,510.0 L670.6,505.6 L672.3,501.1 L674.1,496.5 L675.9,491.8 L677.7,487.0 L679.7,482.0 L681.7,477.0 L683.7,471.8 L685.8,466.4 L688.0,460.9 L690.3,455.3 L692.7,449.5 L695.1,443.5 L697.6,437.4 L700.2,431.1 L702.9,424.7 L705.6,418.1 L708.5,411.2 L711.4,404.2 L714.4,397.0 L717.6,389.4 L720.9,381.7 L724.3,373.6 L727.8,365.3 L731.6,356.6 L735.5,347.6 L739.6,338.2 L743.9,328.3 L748.5,318.0 L753.3,307.3 L758.2,296.1 L763.4,284.4 L768.8,272.1 L774.5,259.3 L780.4,245.8 L786.5,231.7 L792.9,216.8 L799.7,201.0 L806.7,184.4 L814.0,166.8 L821.6,148.0 L829.6,128.1 L837.9,106.7 L846.6,83.8 L855.6,59.2 L864.9,32.5 L874.7,3.5" fill="none" stroke="#000088" stroke-width="1" shape-rendering="crispEdges"/>
<line x1="-678.0" y1="760" x2="42.0" y2="40" stroke="#fff" stroke-width="1"/>
<line x1="-618.0" y1="760" x2="102.0" y2="40" stroke="#fff" stroke-width="1"/>
<line x1="-558.0" y1="760" x2="162.0" y2="40" stroke="#fff" stroke-width="1"/>
<line x1="-498.0" y1="760" x2="222.0" y2="40" stroke="#fff" stroke-width="1"/>
<line x1="-438.0" y1="760" x2="282.0" y2="40" stroke="#fff" stroke-width="1"/>
<line x1="-378.0" y1="760" x2="342.0" y2="40" stroke="#fff" stroke-width="1"/>
<line x1="-318.0" y1="760" x2="402.0" y2="40" stroke="#fff" stroke-width="1"/>
<line x1="-258.0" y1="760" x2="462.0" y2="40" stroke="#fff" stroke-width="1"/>
<line x1="-198.0" y1="760" x2="522.0" y2="40" stroke="#fff" stroke-width="1"/>
<line x1="-138.0" y1="760" x2="582.0" y2="40" stroke="#fff" stroke-width="1"/>
<line x1="-78.0" y1="760" x2="642.0" y2="40" stroke="#fff" stroke-width="1"/>
<line x1="-18.0" y1="760" x2="702.0" y2="40" stroke="#fff" stroke-width="1"/>
<line x1="42.0" y1="760" x2="762.0" y2="40" stroke="#fff" stroke-width="1"/>
<line x1="102.0" y1="760" x2="822.0" y2="40" stroke="#fff" stroke-width="1"/>
<line x1="162.0" y1="760" x2="882.0" y2="40" stroke="#fff" stroke-width="1"/>
<line x1="222.0" y1="760" x2="942.0" y2="40" stroke="#fff" stroke-width="1"/>
<line x1="282.0" y1="760" x2="1002.0" y2="40" stroke="#fff" stroke-width="1"/>
<line x1="342.0" y1="760" x2="1062.0" y2="40" stroke="#fff" stroke-width="1"/>
<line x1="402.0" y1="760" x2="1122.0" y2="40" stroke="#fff" stroke-width="1"/>
<line x1="462.0" y1="760" x2="1182.0" y2="40" stroke="#fff" stroke-width="1"/>
<line x1="522.0" y1="760" x2="1242.0" y2="40" stroke="#fff" stroke-width="1"/>
<line x1="582.0" y1="760" x2="1302.0" y2="40" stroke="#fff" stroke-width="1"/>
<line x1="642.0" y1="760" x2="1362.0" y2="40" stroke="#fff" stroke-width="1"/>
</g>
<line x1="56" y1="50.5" x2="667" y2="50.5" stroke="#fff" stroke-width="1"/>
<line x1="56" y1="321.5" x2="667" y2="321.5" stroke="#fff" stroke-width="1"/>
<line x1="56" y1="449.5" x2="667" y2="449.5" stroke="#fff" stroke-width="1"/>
<line x1="56" y1="529.5" x2="667" y2="529.5" stroke="#fff" stroke-width="1"/>
<line x1="56" y1="586.5" x2="667" y2="586.5" stroke="#fff" stroke-width="1"/>
<line x1="56" y1="630.5" x2="667" y2="630.5" stroke="#fff" stroke-width="1"/>
<line x1="56" y1="665.5" x2="667" y2="665.5" stroke="#fff" stroke-width="1"/>
<line x1="56" y1="694.5" x2="667" y2="694.5" stroke="#fff" stroke-width="1"/>
<line x1="56" y1="719.5" x2="667" y2="719.5" stroke="#fff" stroke-width="1"/>
<line x1="56" y1="740.5" x2="667" y2="740.5" stroke="#fff" stroke-width="1"/>
<rect x="61.5" y="50.5" width="600" height="699" fill="none" stroke="#fff" stroke-width="1"/>
<line x1="61.5" y1="749" x2="61.5" y2="755" stroke="#fff"/>
<line x1="62" y1="706.5" x2="625" y2="706.5" stroke="#ff00ff" stroke-width="1" shape-rendering="crispEdges"/>
<path d="M487.3,50.5 L478.2,82.9 L460.3,165.0 L457.6,180.0 L451.0,218.0 L449.5,280.0 L449.9,292.6 L451.8,315.4 L453.1,343.1 L456.9,368.4 L460.7,399.3 L470.3,449.3 L475.4,473.3 L481.7,514.3 L490.5,600.0 L493.0,637.9 L494.3,685.9 L506.9,697.6 L555.2,731.0" fill="none" stroke="#ffb0ff" stroke-width="1" stroke-linejoin="round" shape-rendering="crispEdges"/>
<path d="M464.6,50.5 L447.9,113.2 L435.9,165.0 L432.0,180.0 L426.0,230.5 L424.1,258.3 L424.1,280.0 L424.7,295.0 L424.0,309.0 L425.3,335.6 L429.0,372.2 L434.1,399.3 L438.1,411.4 L445.0,449.3 L450.7,473.9 L458.8,511.3 L469.5,570.0 L472.7,590.9 L474.1,600.0 L477.2,630.3 L480.4,672.0 L483.8,706.4" fill="none" stroke="#ff00ff" stroke-width="1" stroke-linejoin="round" shape-rendering="crispEdges"/>
<path d="M483.8,706.4 L470.1,731.0" fill="none" stroke="#ff00ff" stroke-width="1" stroke-linejoin="round" shape-rendering="crispEdges"/>
<path d="M483.8,706.4 L519.0,730.5" fill="none" stroke="#ff00ff" stroke-width="1" stroke-linejoin="round" shape-rendering="crispEdges"/>
<path d="M62.4,665.6 L129.3,685.2 L154.6,694.3 L165.0,695.4 L176.0,698.7 L168.9,705.3 L174.4,707.5 L184.8,710.2 L194.4,716.1 L201.8,718.4 L215.2,720.9 L224.7,724.7 L228.5,724.7" fill="none" stroke="#e07000" stroke-width="1" stroke-linejoin="round" shape-rendering="crispEdges"/>
<path d="M132.7,731.1 L164.5,730.5 L208.0,726.1 L224.7,725.7" fill="none" stroke="#e07000" stroke-width="1" stroke-linejoin="round" shape-rendering="crispEdges"/>
<path d="M62.4,666.9 L65.6,685.2 L72.5,694.6 L70.6,698.4 L91.0,699.8 L119.5,702.0 L156.8,704.7 L208.0,708.0 L221.0,709.5 L293.4,710.6 L319.8,710.6 L330.3,707.6 L354.5,710.2" fill="none" stroke="#ffff00" stroke-width="1" stroke-linejoin="round" shape-rendering="crispEdges"/>
<path d="M215.0,723.0 L261.8,718.5 L297.8,717.2 L307.5,716.4 L326.8,713.7 L332.0,712.4 L343.5,716.4 L326.8,719.9 L302.2,724.3 L306.6,725.1 L336.4,726.9 L380.0,729.5 L404.0,730.1 L450.0,731.2 L485.0,731.0" fill="none" stroke="#f0f000" stroke-width="1" stroke-linejoin="round" shape-rendering="crispEdges"/>
<path d="M200.0,727.6 L254.7,730.4 L301.8,724.2" fill="none" stroke="#f0f000" stroke-width="1" stroke-linejoin="round" shape-rendering="crispEdges"/>
<path d="M330.3,704.5 L361.0,701.4 L377.8,698.8 L380.2,695.3 L389.1,685.9 L392.5,681.5 L406.2,665.4 L420.6,662.1 L452.6,654.3" fill="none" stroke="#c8c800" stroke-width="1" stroke-linejoin="round" shape-rendering="crispEdges"/>
<path d="M543.9,50.5 L528.7,70.3 L516.5,82.3 L504.5,92.4 L494.4,102.5 L491.5,105.4 L486.4,113.2 L453.6,155.5 L441.0,170.0 L428.5,182.3 L404.5,204.2 L393.8,209.7 L391.9,216.6 L390.4,223.6 L384.3,232.4 L376.7,243.8 L373.6,266.5 L358.8,279.8 L343.9,291.8 L346.6,310.9 L354.2,321.0 L374.4,337.4 L378.5,353.8 L371.2,362.0 L365.2,374.0 L364.3,394.8 L348.8,403.6 L375.6,425.0 L351.3,433.5 L374.0,441.5 L360.4,449.5 L340.8,465.1 L333.3,467.2 L350.3,474.5 L371.8,476.4 L393.9,479.0 L378.6,522.7 L372.9,533.4 L399.4,545.4 L347.7,556.5 L360.3,558.0 L386.8,561.2 L393.8,565.0 L393.8,587.0 L390.0,590.9 L364.1,616.1 L410.8,617.1 L301.0,620.2 L344.6,629.7 L392.0,636.0 L394.5,639.1 L445.7,648.0 L443.8,661.9 L443.8,685.5 L444.3,694.3 L441.5,698.1 L459.1,707.5 L476.7,710.2 L477.2,716.2 L471.2,725.0 L475.0,731.0" fill="none" stroke="#00ffff" stroke-width="1" stroke-linejoin="round" shape-rendering="crispEdges"/>
<path d="M656,102.5h5M658.5,100v5M653,105.5h5M655.5,103v5M647,113.5h5M649.5,111v5M621,155.5h5M623.5,153v5M615,170.5h5M617.5,168v5M601,182.5h5M603.5,180v5M588,204.5h5M590.5,202v5M557,210.5h5M559.5,208v5M546,215.5h5M548.5,213v5M544,218.5h5M546.5,216v5M539,223.5h5M541.5,221v5M536,232.5h5M538.5,230v5M530,244.5h5M532.5,242v5M507,266.5h5M509.5,264v5M500,279.5h5M502.5,277v5M479,292.5h5M481.5,290v5M458,310.5h5M460.5,308v5M437,323.5h5M439.5,321v5M417,337.5h5M419.5,335v5M406,353.5h5M408.5,351v5M400,362.5h5M402.5,360v5M397,374.5h5M399.5,372v5M399,394.5h5M401.5,392v5M401,403.5h5M403.5,401v5M405,425.5h5M407.5,423v5M408,433.5h5M410.5,431v5M408,441.5h5M410.5,439v5M417,465.5h5M419.5,463v5M417,474.5h5M419.5,472v5M417,479.5h5M419.5,477v5M436,522.5h5M438.5,520v5M439,533.5h5M441.5,531v5M435,545.5h5M437.5,543v5M436,556.5h5M438.5,554v5M436,561.5h5M438.5,559v5M437,565.5h5M439.5,563v5M452,587.5h5M454.5,585v5M451,590.5h5M453.5,588v5M454,616.5h5M456.5,614v5M453,639.5h5M455.5,637v5M453,648.5h5M455.5,646v5M466,662.5h5M468.5,660v5M490,685.5h5M492.5,683v5M505,698.5h5M507.5,696v5M503,707.5h5M505.5,705v5M493,710.5h5M495.5,708v5M497,715.5h5M499.5,713v5M504,725.5h5M506.5,723v5M518,730.5h5M520.5,728v5M523,731.5h5M525.5,729v5" stroke="#fff" stroke-width="1" fill="none" shape-rendering="crispEdges"/>
<path d="M661.0,101.6 L658.9,102.1 L655.7,105.3 L649.4,113.5 L623.6,155.2 L617.3,170.5 L603.2,182.6 L590.6,204.1 L559.0,210.7 L548.9,215.2 L546.4,218.0 L541.3,223.3 L538.2,232.5 L532.1,244.5 L509.4,266.2 L502.8,279.8 L481.6,292.2 L460.0,310.3 L439.8,323.9 L424.7,334.0 L419.6,337.8 L408.3,353.2 L402.0,362.1 L399.4,374.1 L401.3,394.3 L403.3,403.6 L407.1,425.3 L410.3,433.5 L410.9,441.5 L413.4,449.3 L419.7,465.7 L419.7,474.5 L419.7,479.0 L438.0,522.0 L441.1,533.4 L437.3,545.4 L438.0,556.5 L438.6,561.2 L439.6,565.4 L454.4,587.0 L453.1,590.9 L456.3,616.1 L452.0,618.3 L450.1,622.7 L451.3,630.3 L455.8,639.1 L455.8,648.0 L468.4,662.5 L481.0,674.5 L492.0,685.5 L507.4,698.7 L505.2,707.5 L495.9,710.2 L499.2,715.7 L506.9,725.0 L520.0,730.5 L525.5,731.0" fill="none" stroke="#ff0000" stroke-width="1" stroke-linejoin="round" shape-rendering="crispEdges"/>
<path d="M134.9,50.5 L146.2,70.3 L122.9,82.0 L123.5,92.4 L75.5,102.5 L89.8,105.4 L121.0,113.6 L165.2,155.0 L144.4,170.0 L120.4,182.2 L121.4,204.3 L179.7,210.4 L205.0,215.4 L205.6,223.3 L180.3,232.7 L134.2,244.4 L127.0,266.4 L169.3,279.5 L245.6,292.5 L309.3,310.9 L352.9,321.6 L419.6,337.5 L391.4,353.2 L348.5,362.7 L361.7,374.6 L388.9,394.2 L379.3,403.6 L385.0,425.3 L404.0,433.5 L396.4,441.5 L409.0,450.6 L419.1,465.7 L394.5,474.5 L364.2,479.3 L285.9,522.1 L287.1,529.7 L265.7,532.9 L266.3,545.5 L265.7,556.9 L238.5,561.3 L247.3,565.1 L268.2,586.2 L264.4,589.1 L187.4,616.6 L167.2,620.8 L140.7,629.6 L115.4,635.0 L134.4,639.1 L169.1,647.3 L162.8,648.6 L178.6,662.4 L162.8,665.6 L76.3,685.2 L122.8,691.5 L151.3,694.3 L166.7,696.5 L178.8,698.7 L208.0,703.0 L232.3,705.7 L238.0,706.6 L252.3,708.5 L263.7,710.0 L239.0,716.2 L245.7,721.9 L255.2,724.2 L259.5,724.2 L224.7,727.6 L211.4,730.4" fill="none" stroke="#ff0080" stroke-width="1" stroke-linejoin="round" shape-rendering="crispEdges"/>
<path d="M108.7,50.5 L97.4,70.3 L121.6,82.0 L126.7,92.4 L181.6,102.5 L199.7,105.4 L217.6,113.6 L165.2,155.0 L140.3,170.0 L127.3,182.6 L229.7,204.2 L277.7,210.3 L296.0,215.4 L289.7,218.1 L283.6,223.6 L253.7,232.4 L229.3,244.4 L247.0,266.5 L289.4,279.8 L343.3,291.8 L355.6,292.4 L427.8,310.3 L463.2,321.0 L457.5,324.2 L505.5,337.8 L475.8,353.0 L439.2,362.1 L470.1,374.4 L499.2,394.3 L493.7,403.6 L498.7,425.3 L517.3,433.5 L511.7,441.5 L523.3,449.3 L535.3,465.5 L529.4,467.6 L511.3,474.5 L481.0,479.8 L403.9,522.0 L403.2,529.6 L379.2,533.4 L372.9,546.0 L367.2,556.1 L347.7,558.7 L331.3,561.2 L331.3,586.5 L325.0,589.1 L325.0,591.6 L296.6,614.3 L296.0,616.4 L277.3,620.2 L253.7,629.7 L235.4,635.4 L253.7,639.1 L289.6,647.3 L283.3,648.6 L295.3,661.9 L277.3,665.0 L200.0,680.2 L175.5,685.5 L145.8,690.4 L116.2,694.8 L115.6,698.1 L121.1,706.4 L127.7,706.9 L139.3,709.1 L151.3,709.6 L121.1,716.2 L127.2,722.3 L139.3,724.0 L91.0,730.5 L121.7,731.1" fill="none" stroke="#00ff00" stroke-width="1" stroke-linejoin="round" shape-rendering="crispEdges"/>
<path d="M95,70.5h5M97.5,68v5M119,82.5h5M121.5,80v5M124,92.5h5M126.5,90v5M179,102.5h5M181.5,100v5M197,105.5h5M199.5,103v5M215,113.5h5M217.5,111v5M163,155.5h5M165.5,153v5M138,170.5h5M140.5,168v5M125,182.5h5M127.5,180v5M227,204.5h5M229.5,202v5M275,210.5h5M277.5,208v5M294,215.5h5M296.5,213v5M287,218.5h5M289.5,216v5M281,223.5h5M283.5,221v5M251,232.5h5M253.5,230v5M227,244.5h5M229.5,242v5M245,266.5h5M247.5,264v5M287,279.5h5M289.5,277v5M341,291.5h5M343.5,289v5M353,292.5h5M355.5,290v5M425,310.5h5M427.5,308v5M461,321.5h5M463.5,319v5M455,324.5h5M457.5,322v5M503,337.5h5M505.5,335v5M473,353.5h5M475.5,351v5M437,362.5h5M439.5,360v5M468,374.5h5M470.5,372v5M497,394.5h5M499.5,392v5M491,403.5h5M493.5,401v5M496,425.5h5M498.5,423v5M515,433.5h5M517.5,431v5M509,441.5h5M511.5,439v5M521,449.5h5M523.5,447v5M533,465.5h5M535.5,463v5M527,467.5h5M529.5,465v5M509,474.5h5M511.5,472v5M479,479.5h5M481.5,477v5M401,522.5h5M403.5,520v5M401,529.5h5M403.5,527v5M370,546.5h5M372.5,544v5M365,556.5h5M367.5,554v5M329,561.5h5M331.5,559v5M329,586.5h5M331.5,584v5M323,589.5h5M325.5,587v5M323,591.5h5M325.5,589v5M294,614.5h5M296.5,612v5M294,616.5h5M296.5,614v5M275,620.5h5M277.5,618v5M251,629.5h5M253.5,627v5M233,635.5h5M235.5,633v5M251,639.5h5M253.5,637v5M287,647.5h5M289.5,645v5M281,648.5h5M283.5,646v5M293,661.5h5M295.5,659v5M275,665.5h5M277.5,663v5M173,685.5h5M175.5,683v5M114,694.5h5M116.5,692v5M113,698.5h5M115.5,696v5M125,706.5h5M127.5,704v5M137,709.5h5M139.5,707v5M149,709.5h5M151.5,707v5M119,716.5h5M121.5,714v5M125,722.5h5M127.5,720v5M137,724.5h5M139.5,722v5M89,730.5h5M91.5,728v5M119,731.5h5M121.5,729v5" stroke="#fff" stroke-width="1" fill="none" shape-rendering="crispEdges"/>
<path d="M144,70.5h5M146.5,68v5M120,82.5h5M122.5,80v5M121,92.5h5M123.5,90v5M73,102.5h5M75.5,100v5M87,105.5h5M89.5,103v5M119,113.5h5M121.5,111v5M163,155.5h5M165.5,153v5M142,170.5h5M144.5,168v5M118,182.5h5M120.5,180v5M119,204.5h5M121.5,202v5M177,210.5h5M179.5,208v5M203,215.5h5M205.5,213v5M203,223.5h5M205.5,221v5M178,232.5h5M180.5,230v5M132,244.5h5M134.5,242v5M125,266.5h5M127.5,264v5M167,279.5h5M169.5,277v5M243,292.5h5M245.5,290v5M307,310.5h5M309.5,308v5M350,321.5h5M352.5,319v5M417,337.5h5M419.5,335v5M389,353.5h5M391.5,351v5M346,362.5h5M348.5,360v5M359,374.5h5M361.5,372v5M386,394.5h5M388.5,392v5M377,403.5h5M379.5,401v5M383,425.5h5M385.5,423v5M402,433.5h5M404.5,431v5M394,441.5h5M396.5,439v5M407,450.5h5M409.5,448v5M417,465.5h5M419.5,463v5M392,474.5h5M394.5,472v5M362,479.5h5M364.5,477v5M283,522.5h5M285.5,520v5M285,529.5h5M287.5,527v5M263,532.5h5M265.5,530v5M264,545.5h5M266.5,543v5M263,556.5h5M265.5,554v5M236,561.5h5M238.5,559v5M245,565.5h5M247.5,563v5M266,586.5h5M268.5,584v5M262,589.5h5M264.5,587v5M185,616.5h5M187.5,614v5M165,620.5h5M167.5,618v5M138,629.5h5M140.5,627v5M113,635.5h5M115.5,633v5M132,639.5h5M134.5,637v5M167,647.5h5M169.5,645v5M160,648.5h5M162.5,646v5M176,662.5h5M178.5,660v5M160,665.5h5M162.5,663v5M74,685.5h5M76.5,683v5M120,691.5h5M122.5,689v5M149,694.5h5M151.5,692v5M164,696.5h5M166.5,694v5M176,698.5h5M178.5,696v5M206,703.5h5M208.5,701v5M230,705.5h5M232.5,703v5M236,706.5h5M238.5,704v5M250,708.5h5M252.5,706v5M261,710.5h5M263.5,708v5M237,716.5h5M239.5,714v5M243,721.5h5M245.5,719v5M253,724.5h5M255.5,722v5M257,724.5h5M259.5,722v5M222,727.5h5M224.5,725v5M209,730.5h5M211.5,728v5" stroke="#fff" stroke-width="1" fill="none" shape-rendering="crispEdges"/>
<path d="M526,70.5h5M528.5,68v5M514,82.5h5M516.5,80v5M502,92.5h5M504.5,90v5M492,102.5h5M494.5,100v5M489,105.5h5M491.5,103v5M484,113.5h5M486.5,111v5M451,155.5h5M453.5,153v5M439,170.5h5M441.5,168v5M426,182.5h5M428.5,180v5M402,204.5h5M404.5,202v5M391,209.5h5M393.5,207v5M389,216.5h5M391.5,214v5M388,223.5h5M390.5,221v5M382,232.5h5M384.5,230v5M374,243.5h5M376.5,241v5M371,266.5h5M373.5,264v5M356,279.5h5M358.5,277v5M341,291.5h5M343.5,289v5M344,310.5h5M346.5,308v5M352,321.5h5M354.5,319v5M372,337.5h5M374.5,335v5M376,353.5h5M378.5,351v5M369,362.5h5M371.5,360v5M363,374.5h5M365.5,372v5M362,394.5h5M364.5,392v5M346,403.5h5M348.5,401v5M373,425.5h5M375.5,423v5M349,433.5h5M351.5,431v5M372,441.5h5M374.5,439v5M358,449.5h5M360.5,447v5M338,465.5h5M340.5,463v5M331,467.5h5M333.5,465v5M348,474.5h5M350.5,472v5M376,522.5h5M378.5,520v5M370,533.5h5M372.5,531v5M397,545.5h5M399.5,543v5M345,556.5h5M347.5,554v5M384,561.5h5M386.5,559v5M391,565.5h5M393.5,563v5M391,587.5h5M393.5,585v5M388,590.5h5M390.5,588v5M362,616.5h5M364.5,614v5M408,617.5h5M410.5,615v5M299,620.5h5M301.5,618v5M342,629.5h5M344.5,627v5M390,636.5h5M392.5,634v5M392,639.5h5M394.5,637v5M443,648.5h5M445.5,646v5M441,661.5h5M443.5,659v5M441,685.5h5M443.5,683v5M439,698.5h5M441.5,696v5M457,707.5h5M459.5,705v5M474,710.5h5M476.5,708v5M475,716.5h5M477.5,714v5M469,725.5h5M471.5,723v5M473,731.5h5M475.5,729v5" stroke="#fff" stroke-width="1" fill="none" shape-rendering="crispEdges"/>
<path d="M70,694.5h5M72.5,692v5M68,698.5h5M70.5,696v5" stroke="#fff" stroke-width="1" fill="none" shape-rendering="crispEdges"/>
<path d="M378,695.5h5M380.5,693v5M387,685.5h5M389.5,683v5M404,665.5h5M406.5,663v5M418,662.5h5M420.5,660v5" stroke="#fff" stroke-width="1" fill="none" shape-rendering="crispEdges"/>
<path d="M324,713.5h5M326.5,711v5M324,719.5h5M326.5,717v5M304,725.5h5M306.5,723v5M334,726.5h5M336.5,724v5M448,731.5h5M450.5,729v5" stroke="#fff" stroke-width="1" fill="none" shape-rendering="crispEdges"/>
<path d="M127,685.5h5M129.5,683v5M152,694.5h5M154.5,692v5M163,695.5h5M165.5,693v5M172,707.5h5M174.5,705v5M182,710.5h5M184.5,708v5M192,716.5h5M194.5,714v5M213,720.5h5M215.5,718v5M222,724.5h5M224.5,722v5" stroke="#fff" stroke-width="1" fill="none" shape-rendering="crispEdges"/>
<path d="M162,730.5h5M164.5,728v5" stroke="#fff" stroke-width="1" fill="none" shape-rendering="crispEdges"/>
<path d="M252,730.5h5M254.5,728v5" stroke="#fff" stroke-width="1" fill="none" shape-rendering="crispEdges"/>
<rect x="389.5" y="678.3" width="7" height="7" fill="#c8c800"/>
<text x="393.0" y="684.8" font-size="8" fill="#000" text-anchor="middle">2</text>
<rect x="449.2" y="651.1" width="7" height="7" fill="#c8c800"/>
<text x="452.7" y="657.6" font-size="8" fill="#000" text-anchor="middle">3</text>
<text x="318.5" y="711" font-size="9" font-weight="bold" fill="#c8c800" textLength="11" lengthAdjust="spacingAndGlyphs">M0</text>
<rect x="67.5" y="607.5" width="43" height="17" fill="#000" stroke="#ffff00" stroke-width="1"/>
<text x="71.3" y="620.8" font-size="12.5" fill="#ffff00" textLength="35.3" lengthAdjust="spacingAndGlyphs">CAPE</text>
<rect x="67.5" y="636.5" width="57" height="17" fill="#000" stroke="#e07000" stroke-width="1"/>
<text x="71.6" y="649.8" font-size="12.5" fill="#e07000" textLength="49" lengthAdjust="spacingAndGlyphs">CINH * 5</text>
<rect x="625.5" y="697.5" width="30" height="17" fill="#000" stroke="#ff00ff" stroke-width="1"/>
<text x="629.5" y="711" font-size="12.5" fill="#ff00ff" textLength="22" lengthAdjust="spacingAndGlyphs">LCL</text>
<text x="32.5" y="55.3" font-size="13.4" fill="#fff" text-anchor="start" font-weight="normal" textLength="20" lengthAdjust="spacingAndGlyphs" >100</text>
<text x="32.5" y="326.3" font-size="13.4" fill="#fff" text-anchor="start" font-weight="normal" textLength="20" lengthAdjust="spacingAndGlyphs" >200</text>
<text x="32.5" y="454.3" font-size="13.4" fill="#fff" text-anchor="start" font-weight="normal" textLength="20" lengthAdjust="spacingAndGlyphs" >300</text>
<text x="32.5" y="534.3" font-size="13.4" fill="#fff" text-anchor="start" font-weight="normal" textLength="20" lengthAdjust="spacingAndGlyphs" >400</text>
<text x="32.5" y="591.3" font-size="13.4" fill="#fff" text-anchor="start" font-weight="normal" textLength="20" lengthAdjust="spacingAndGlyphs" >500</text>
<text x="32.5" y="635.3" font-size="13.4" fill="#fff" text-anchor="start" font-weight="normal" textLength="20" lengthAdjust="spacingAndGlyphs" >600</text>
<text x="32.5" y="670.3" font-size="13.4" fill="#fff" text-anchor="start" font-weight="normal" textLength="20" lengthAdjust="spacingAndGlyphs" >700</text>
<text x="32.5" y="699.3" font-size="13.4" fill="#fff" text-anchor="start" font-weight="normal" textLength="20" lengthAdjust="spacingAndGlyphs" >800</text>
<text x="32.5" y="724.3" font-size="13.4" fill="#fff" text-anchor="start" font-weight="normal" textLength="20" lengthAdjust="spacingAndGlyphs" >900</text>
<text x="25.5" y="745.3" font-size="13.4" fill="#fff" text-anchor="start" font-weight="normal" textLength="27" lengthAdjust="spacingAndGlyphs" >1000</text>
<text x="671" y="55.3" font-size="13.4" fill="#fff" text-anchor="start" font-weight="normal" textLength="45.6" lengthAdjust="spacingAndGlyphs" >16556m</text>
<text x="671" y="326.3" font-size="13.4" fill="#fff" text-anchor="start" font-weight="normal" textLength="45.6" lengthAdjust="spacingAndGlyphs" >12125m</text>
<text x="671" y="454.3" font-size="13.4" fill="#fff" text-anchor="start" font-weight="normal" textLength="38.6" lengthAdjust="spacingAndGlyphs" >9487m</text>
<text x="671" y="534.3" font-size="13.4" fill="#fff" text-anchor="start" font-weight="normal" textLength="38.6" lengthAdjust="spacingAndGlyphs" >7448m</text>
<text x="671" y="591.3" font-size="13.4" fill="#fff" text-anchor="start" font-weight="normal" textLength="38.6" lengthAdjust="spacingAndGlyphs" >5773m</text>
<text x="671" y="635.3" font-size="13.4" fill="#fff" text-anchor="start" font-weight="normal" textLength="38.6" lengthAdjust="spacingAndGlyphs" >4349m</text>
<text x="671" y="670.3" font-size="13.4" fill="#fff" text-anchor="start" font-weight="normal" textLength="38.6" lengthAdjust="spacingAndGlyphs" >3109m</text>
<text x="671" y="699.3" font-size="13.4" fill="#fff" text-anchor="start" font-weight="normal" textLength="38.6" lengthAdjust="spacingAndGlyphs" >1995m</text>
<text x="671" y="724.3" font-size="13.4" fill="#fff" text-anchor="start" font-weight="normal" textLength="31.6" lengthAdjust="spacingAndGlyphs" >985m</text>
<text x="50.0" y="767.5" font-size="13.4" fill="#fff" text-anchor="start" font-weight="normal" textLength="18" lengthAdjust="spacingAndGlyphs" >-50</text>
<line x1="61.5" y1="788" x2="61.5" y2="792" stroke="#fff"/>
<text x="58.5" y="805.2" font-size="13.4" fill="#fff" text-anchor="start" font-weight="normal" textLength="6" lengthAdjust="spacingAndGlyphs" >0</text>
<line x1="61.5" y1="826" x2="61.5" y2="830" stroke="#fff"/>
<text x="58.5" y="842.8" font-size="13.4" fill="#fff" text-anchor="start" font-weight="normal" textLength="6" lengthAdjust="spacingAndGlyphs" >0</text>
<text x="110.0" y="767.5" font-size="13.4" fill="#fff" text-anchor="start" font-weight="normal" textLength="18" lengthAdjust="spacingAndGlyphs" >-40</text>
<line x1="121.5" y1="788" x2="121.5" y2="792" stroke="#fff"/>
<text x="115.0" y="805.2" font-size="13.4" fill="#fff" text-anchor="start" font-weight="normal" textLength="13" lengthAdjust="spacingAndGlyphs" >10</text>
<line x1="121.5" y1="826" x2="121.5" y2="830" stroke="#fff"/>
<text x="111.5" y="842.8" font-size="13.4" fill="#fff" text-anchor="start" font-weight="normal" textLength="20" lengthAdjust="spacingAndGlyphs" >300</text>
<text x="170.0" y="767.5" font-size="13.4" fill="#fff" text-anchor="start" font-weight="normal" textLength="18" lengthAdjust="spacingAndGlyphs" >-30</text>
<line x1="181.5" y1="788" x2="181.5" y2="792" stroke="#fff"/>
<text x="175.0" y="805.2" font-size="13.4" fill="#fff" text-anchor="start" font-weight="normal" textLength="13" lengthAdjust="spacingAndGlyphs" >20</text>
<line x1="181.5" y1="826" x2="181.5" y2="830" stroke="#fff"/>
<text x="171.5" y="842.8" font-size="13.4" fill="#fff" text-anchor="start" font-weight="normal" textLength="20" lengthAdjust="spacingAndGlyphs" >600</text>
<text x="230.0" y="767.5" font-size="13.4" fill="#fff" text-anchor="start" font-weight="normal" textLength="18" lengthAdjust="spacingAndGlyphs" >-20</text>
<line x1="241.5" y1="788" x2="241.5" y2="792" stroke="#fff"/>
<text x="235.0" y="805.2" font-size="13.4" fill="#fff" text-anchor="start" font-weight="normal" textLength="13" lengthAdjust="spacingAndGlyphs" >30</text>
<line x1="241.5" y1="826" x2="241.5" y2="830" stroke="#fff"/>
<text x="231.5" y="842.8" font-size="13.4" fill="#fff" text-anchor="start" font-weight="normal" textLength="20" lengthAdjust="spacingAndGlyphs" >900</text>
<text x="290.0" y="767.5" font-size="13.4" fill="#fff" text-anchor="start" font-weight="normal" textLength="18" lengthAdjust="spacingAndGlyphs" >-10</text>
<line x1="301.5" y1="788" x2="301.5" y2="792" stroke="#fff"/>
<text x="295.0" y="805.2" font-size="13.4" fill="#fff" text-anchor="start" font-weight="normal" textLength="13" lengthAdjust="spacingAndGlyphs" >40</text>
<line x1="301.5" y1="826" x2="301.5" y2="830" stroke="#fff"/>
<text x="288.0" y="842.8" font-size="13.4" fill="#fff" text-anchor="start" font-weight="normal" textLength="27" lengthAdjust="spacingAndGlyphs" >1200</text>
<text x="358.5" y="767.5" font-size="13.4" fill="#fff" text-anchor="start" font-weight="normal" textLength="6" lengthAdjust="spacingAndGlyphs" >0</text>
<line x1="361.5" y1="788" x2="361.5" y2="792" stroke="#fff"/>
<text x="355.0" y="805.2" font-size="13.4" fill="#fff" text-anchor="start" font-weight="normal" textLength="13" lengthAdjust="spacingAndGlyphs" >50</text>
<line x1="361.5" y1="826" x2="361.5" y2="830" stroke="#fff"/>
<text x="348.0" y="842.8" font-size="13.4" fill="#fff" text-anchor="start" font-weight="normal" textLength="27" lengthAdjust="spacingAndGlyphs" >1500</text>
<text x="415.0" y="767.5" font-size="13.4" fill="#fff" text-anchor="start" font-weight="normal" textLength="13" lengthAdjust="spacingAndGlyphs" >10</text>
<line x1="421.5" y1="788" x2="421.5" y2="792" stroke="#fff"/>
<text x="415.0" y="805.2" font-size="13.4" fill="#fff" text-anchor="start" font-weight="normal" textLength="13" lengthAdjust="spacingAndGlyphs" >60</text>
<line x1="421.5" y1="826" x2="421.5" y2="830" stroke="#fff"/>
<text x="408.0" y="842.8" font-size="13.4" fill="#fff" text-anchor="start" font-weight="normal" textLength="27" lengthAdjust="spacingAndGlyphs" >1800</text>
<text x="475.0" y="767.5" font-size="13.4" fill="#fff" text-anchor="start" font-weight="normal" textLength="13" lengthAdjust="spacingAndGlyphs" >20</text>
<line x1="481.5" y1="788" x2="481.5" y2="792" stroke="#fff"/>
<text x="475.0" y="805.2" font-size="13.4" fill="#fff" text-anchor="start" font-weight="normal" textLength="13" lengthAdjust="spacingAndGlyphs" >70</text>
<line x1="481.5" y1="826" x2="481.5" y2="830" stroke="#fff"/>
<text x="468.0" y="842.8" font-size="13.4" fill="#fff" text-anchor="start" font-weight="normal" textLength="27" lengthAdjust="spacingAndGlyphs" >2100</text>
<text x="535.0" y="767.5" font-size="13.4" fill="#fff" text-anchor="start" font-weight="normal" textLength="13" lengthAdjust="spacingAndGlyphs" >30</text>
<line x1="541.5" y1="788" x2="541.5" y2="792" stroke="#fff"/>
<text x="535.0" y="805.2" font-size="13.4" fill="#fff" text-anchor="start" font-weight="normal" textLength="13" lengthAdjust="spacingAndGlyphs" >80</text>
<line x1="541.5" y1="826" x2="541.5" y2="830" stroke="#fff"/>
<text x="528.0" y="842.8" font-size="13.4" fill="#fff" text-anchor="start" font-weight="normal" textLength="27" lengthAdjust="spacingAndGlyphs" >2400</text>
<text x="595.0" y="767.5" font-size="13.4" fill="#fff" text-anchor="start" font-weight="normal" textLength="13" lengthAdjust="spacingAndGlyphs" >40</text>
<line x1="601.5" y1="788" x2="601.5" y2="792" stroke="#fff"/>
<text x="595.0" y="805.2" font-size="13.4" fill="#fff" text-anchor="start" font-weight="normal" textLength="13" lengthAdjust="spacingAndGlyphs" >90</text>
<line x1="601.5" y1="826" x2="601.5" y2="830" stroke="#fff"/>
<text x="588.0" y="842.8" font-size="13.4" fill="#fff" text-anchor="start" font-weight="normal" textLength="27" lengthAdjust="spacingAndGlyphs" >2700</text>
<text x="655.0" y="767.5" font-size="13.4" fill="#fff" text-anchor="start" font-weight="normal" textLength="13" lengthAdjust="spacingAndGlyphs" >50</text>
<line x1="661.5" y1="788" x2="661.5" y2="792" stroke="#fff"/>
<text x="651.5" y="805.2" font-size="13.4" fill="#fff" text-anchor="start" font-weight="normal" textLength="20" lengthAdjust="spacingAndGlyphs" >100</text>
<line x1="661.5" y1="826" x2="661.5" y2="830" stroke="#fff"/>
<text x="648.0" y="842.8" font-size="13.4" fill="#fff" text-anchor="start" font-weight="normal" textLength="27" lengthAdjust="spacingAndGlyphs" >3000</text>
<line x1="61.5" y1="863" x2="61.5" y2="867" stroke="#fff"/>
<text x="46.5" y="879.3" font-size="13.4" fill="#fff" text-anchor="start" font-weight="normal" textLength="25" lengthAdjust="spacingAndGlyphs" >-100</text>
<line x1="136.5" y1="863" x2="136.5" y2="867" stroke="#fff"/>
<text x="125.0" y="879.3" font-size="13.4" fill="#fff" text-anchor="start" font-weight="normal" textLength="18" lengthAdjust="spacingAndGlyphs" >-50</text>
<line x1="211.5" y1="863" x2="211.5" y2="867" stroke="#fff"/>
<text x="208.5" y="879.3" font-size="13.4" fill="#fff" text-anchor="start" font-weight="normal" textLength="6" lengthAdjust="spacingAndGlyphs" >0</text>
<line x1="286.5" y1="863" x2="286.5" y2="867" stroke="#fff"/>
<text x="280.0" y="879.3" font-size="13.4" fill="#fff" text-anchor="start" font-weight="normal" textLength="13" lengthAdjust="spacingAndGlyphs" >50</text>
<line x1="361.5" y1="863" x2="361.5" y2="867" stroke="#fff"/>
<text x="351.5" y="879.3" font-size="13.4" fill="#fff" text-anchor="start" font-weight="normal" textLength="20" lengthAdjust="spacingAndGlyphs" >100</text>
<line x1="436.5" y1="863" x2="436.5" y2="867" stroke="#fff"/>
<text x="426.5" y="879.3" font-size="13.4" fill="#fff" text-anchor="start" font-weight="normal" textLength="20" lengthAdjust="spacingAndGlyphs" >150</text>
<line x1="511.5" y1="863" x2="511.5" y2="867" stroke="#fff"/>
<text x="501.5" y="879.3" font-size="13.4" fill="#fff" text-anchor="start" font-weight="normal" textLength="20" lengthAdjust="spacingAndGlyphs" >200</text>
<line x1="586.5" y1="863" x2="586.5" y2="867" stroke="#fff"/>
<text x="576.5" y="879.3" font-size="13.4" fill="#fff" text-anchor="start" font-weight="normal" textLength="20" lengthAdjust="spacingAndGlyphs" >250</text>
<line x1="661.5" y1="863" x2="661.5" y2="867" stroke="#fff"/>
<text x="651.5" y="879.3" font-size="13.4" fill="#fff" text-anchor="start" font-weight="normal" textLength="20" lengthAdjust="spacingAndGlyphs" >300</text>
<text x="277" y="780.8" font-size="13.2" fill="#fff" text-anchor="start" font-weight="normal" textLength="170" lengthAdjust="spacingAndGlyphs" >Temperature, Dewpoint  [ °C ]</text>
<text x="307" y="818.7" font-size="13.2" fill="#fff" text-anchor="start" font-weight="normal" textLength="106" lengthAdjust="spacingAndGlyphs" >Windspeed  [ knt ]</text>
<text x="293" y="856.6" font-size="13.2" fill="#fff" text-anchor="start" font-weight="normal" textLength="136" lengthAdjust="spacingAndGlyphs" >CAPE, CINH * 5  [ J/kg ]</text>
<text x="260" y="892.4" font-size="13.2" fill="#fff" text-anchor="start" font-weight="normal" textLength="203" lengthAdjust="spacingAndGlyphs" >Storm Relative Helicity  [ m^2/s^2 ]</text>
<text x="62" y="28.7" font-size="16.4" fill="#fff" text-anchor="start" font-weight="bold" textLength="241" lengthAdjust="spacingAndGlyphs" >Station: 06610 Payerne (LSMP)</text>
<text x="329.5" y="28.7" font-size="16.4" fill="#fff" text-anchor="start" font-weight="bold" textLength="127.5" lengthAdjust="spacingAndGlyphs" >Date: 20.06.2021</text>
<text x="480.5" y="28.7" font-size="16.4" fill="#fff" text-anchor="start" font-weight="bold" textLength="90.5" lengthAdjust="spacingAndGlyphs" >Time: 1200Z</text>
<text x="747" y="31.6" font-size="12.8" fill="#00ff00" text-anchor="start" font-weight="bold" textLength="28" lengthAdjust="spacingAndGlyphs" >OBS</text>
<text x="818.5" y="31.6" font-size="12.8" fill="#ff0080" text-anchor="start" font-weight="bold" textLength="16.5" lengthAdjust="spacingAndGlyphs" >SR</text>
<line x1="761.5" y1="40" x2="761.5" y2="770" stroke="#00ff00"/>
<line x1="826.5" y1="40" x2="826.5" y2="770" stroke="#ff0080"/>
<path d="M761.5,70.5L737.3,86.5M761.5,82.6L737.3,98.6M761.5,92.1L747.9,117.7M761.5,102.6L743.1,125.0M761.5,105.3L744.3,128.7M761.5,113.7L748.1,139.4M761.5,155.0L765.4,183.7M761.5,170.0L759.7,198.9M761.5,182.5L745.8,206.9M761.5,204.3L745.9,228.7M761.5,210.4L750.5,237.2M761.5,215.4L753.0,243.1M761.5,223.3L753.7,251.2M761.5,232.7L756.9,261.3M761.5,244.4L749.1,270.6M761.5,266.4L740.0,285.8M761.5,279.5L742.1,301.0M761.5,292.5L747.9,318.1M761.5,310.9L743.7,333.8M761.5,321.6L749.1,347.8M761.5,324.2L750.4,351.0M761.5,337.5L757.0,366.1M761.5,353.2L754.9,381.4M761.5,362.7L753.8,390.7M761.5,374.6L749.1,400.8M761.5,394.2L748.4,420.1M761.5,403.6L746.9,428.7M761.5,425.3L746.9,450.4M761.5,433.5L747.0,458.6M761.5,441.5L746.9,466.6M761.5,450.6L745.1,474.5M761.5,465.7L746.1,490.3M761.5,474.5L745.4,498.6M761.5,479.3L745.6,503.6M761.5,522.1L744.4,545.5M761.5,529.7L746.2,554.3M761.5,532.9L747.6,558.4M761.5,545.5L748.2,571.3M761.5,556.9L750.4,583.7M761.5,561.3L753.5,589.2M761.5,565.1L755.5,593.5M761.5,586.2L761.5,615.2M761.5,589.1L761.5,618.1M761.5,616.6L748.8,642.6M761.5,620.8L745.8,645.2M761.5,629.6L742.7,651.7M761.5,635.0L742.3,656.7M761.5,639.1L742.1,660.7M761.5,647.3L739.4,666.0M761.5,648.6L738.3,666.0M761.5,662.4L743.9,685.4M761.5,665.6L745.0,689.4M761.5,685.2L742.4,707.0M761.5,699.0L770.3,726.6M761.5,698.1L790.5,699.7M761.5,703.0L790.5,702.5M761.5,706.4L790.5,705.6M761.5,706.9L790.4,709.0M761.5,709.1L790.3,712.1M761.5,709.6L790.1,714.4M761.5,716.2L789.3,707.9M761.5,720.0L774.9,694.3M761.5,722.3L788.7,712.3M761.5,724.0L786.7,709.6M761.5,729.3L784.9,712.1M761.5,730.5L784.5,712.8M761.5,702.0L758.3,730.8M826.6,70.5L846.1,49.0M826.6,82.6L843.8,59.2M826.6,92.1L853.2,80.6M826.6,102.6L849.1,120.9M826.6,105.3L831.6,133.9M826.6,113.7L835.5,141.3M826.6,155.0L855.1,160.1M826.6,170.0L855.5,168.2M826.6,182.5L852.5,169.4M826.6,204.3L826.6,233.3M826.6,210.4L830.0,239.2M826.6,215.4L832.0,243.9M826.6,223.3L836.1,250.7M826.6,232.7L839.9,258.5M826.6,244.4L834.5,272.3M826.6,266.4L804.9,285.6M826.6,279.5L809.5,302.9M826.6,292.5L818.8,320.4M826.6,310.9L812.1,336.0M826.6,321.6L818.2,349.3M826.6,324.2L820.3,352.5M826.6,337.5L826.0,366.5M826.6,353.2L829.7,382.0M826.6,362.7L828.0,391.7M826.6,374.6L818.3,402.4M826.6,394.2L816.7,421.4M826.6,403.6L814.3,429.9M826.6,425.3L814.5,451.6M826.6,433.5L814.3,459.8M826.6,441.5L813.4,467.3M826.6,450.6L812.9,476.2M826.6,465.7L813.6,491.6M826.6,474.5L812.3,499.7M826.6,479.3L812.4,504.6M826.6,522.1L812.6,547.5M826.6,529.7L813.5,555.6M826.6,532.9L815.8,559.8M826.6,545.5L820.1,573.8M826.6,556.9L823.4,585.7M826.6,561.3L831.8,589.8M826.6,565.1L830.0,593.9M826.6,586.2L838.9,612.4M826.6,589.1L838.5,615.5M826.6,616.6L824.0,645.5M826.6,620.8L819.8,649.0M826.6,629.6L812.9,655.2M826.6,635.0L810.1,658.9M826.6,639.1L808.3,661.6M826.6,647.3L803.6,664.9M826.6,648.6L802.9,665.3M826.6,662.4L813.6,688.3M826.6,665.6L815.3,692.3M826.6,685.4L855.2,690.3M826.6,694.6L854.4,686.4M826.6,695.8L854.9,689.4M826.6,698.4L855.3,694.2M826.6,706.0L853.9,696.3M826.6,707.2L851.8,692.8M826.6,709.4L853.6,698.8M826.6,715.4L851.1,699.9M826.6,718.6L850.7,702.5M826.6,723.6L848.1,704.1M826.6,725.5L847.7,705.6M826.6,730.0L847.3,709.7" stroke="#fff" stroke-width="1" fill="none" shape-rendering="crispEdges"/>
<text x="894" y="39.5" font-size="12.8" fill="#fff" text-anchor="start" font-weight="normal" >Parameter</text>
<line x1="894" y1="41.5" x2="954" y2="41.5" stroke="#fff" shape-rendering="crispEdges"/>
<text x="1064" y="39.5" font-size="12.8" fill="#fff" text-anchor="start" font-weight="normal" >Value LCL</text>
<line x1="1064" y1="41.5" x2="1124" y2="41.5" stroke="#fff" shape-rendering="crispEdges"/>
<text x="1152" y="39.5" font-size="12.8" fill="#fff" text-anchor="start" font-weight="normal" >Value CCL</text>
<line x1="1152" y1="41.5" x2="1214" y2="41.5" stroke="#fff" shape-rendering="crispEdges"/>
<text x="1230" y="39.5" font-size="12.8" fill="#fff" text-anchor="start" font-weight="normal" >Unit</text>
<line x1="1230" y1="41.5" x2="1253" y2="41.5" stroke="#fff" shape-rendering="crispEdges"/>
<text x="894" y="61.5" font-size="12.8" fill="#fff" text-anchor="start" font-weight="normal" >Convective Temperature:</text>
<text x="1124" y="61.5" font-size="12.8" fill="#ff0000" text-anchor="end" font-weight="normal" >30.85</text>
<text x="1230" y="61.5" font-size="12.8" fill="#fff" text-anchor="start" font-weight="normal" >[°C]</text>
<text x="894" y="78.5" font-size="12.8" fill="#fff" text-anchor="start" font-weight="normal" >Snowfall Height:</text>
<text x="1124" y="78.5" font-size="12.8" fill="#fff" text-anchor="end" font-weight="normal" >3479.47</text>
<text x="1230" y="78.5" font-size="12.8" fill="#fff" text-anchor="start" font-weight="normal" >[m]</text>
<text x="894" y="123.5" font-size="12.8" fill="#fff" text-anchor="start" font-weight="normal" >Lifted Index:</text>
<text x="1124" y="123.5" font-size="12.8" fill="#ff0000" text-anchor="end" font-weight="normal" >-3.06</text>
<text x="1214" y="123.5" font-size="12.8" fill="#ff0000" text-anchor="end" font-weight="normal" >-5.93</text>
<text x="1230" y="123.5" font-size="12.8" fill="#fff" text-anchor="start" font-weight="normal" >[°C]</text>
<text x="894" y="140.5" font-size="12.8" fill="#fff" text-anchor="start" font-weight="normal" >CAPE ML:</text>
<text x="1124" y="140.5" font-size="12.8" fill="#ff0000" text-anchor="end" font-weight="normal" >1418.63</text>
<text x="1214" y="140.5" font-size="12.8" fill="#ff0000" text-anchor="end" font-weight="normal" >2654.63</text>
<text x="1230" y="140.5" font-size="12.8" fill="#fff" text-anchor="start" font-weight="normal" >[J/kg]</text>
<text x="894" y="157.5" font-size="12.8" fill="#fff" text-anchor="start" font-weight="normal" >CINH | LSI (Inversion: 815mB):</text>
<text x="1124" y="157.5" font-size="12.8" fill="#ffff00" text-anchor="end" font-weight="normal" >135.44</text>
<text x="1124" y="157.5" font-size="12.8" fill="#fff" text-anchor="start" font-weight="normal" >,</text>
<text x="1136" y="157.5" font-size="12.8" fill="#ffff00" text-anchor="start" font-weight="normal" >2.50</text>
<text x="1230" y="157.5" font-size="12.8" fill="#fff" text-anchor="start" font-weight="normal" >[J/kg], [°C]</text>
<text x="894" y="174.5" font-size="12.8" fill="#fff" text-anchor="start" font-weight="normal" >CAPE SFC:</text>
<text x="1124" y="174.5" font-size="12.8" fill="#ff0000" text-anchor="end" font-weight="normal" >2116.87</text>
<text x="1214" y="174.5" font-size="12.8" fill="#ff0000" text-anchor="end" font-weight="normal" >3089.60</text>
<text x="1230" y="174.5" font-size="12.8" fill="#fff" text-anchor="start" font-weight="normal" >[J/kg]</text>
<text x="894" y="191.5" font-size="12.8" fill="#fff" text-anchor="start" font-weight="normal" >CAPE MU | CINH MU:</text>
<text x="1124" y="191.5" font-size="12.8" fill="#ff0000" text-anchor="end" font-weight="normal" >2116.87</text>
<text x="1124" y="191.5" font-size="12.8" fill="#fff" text-anchor="start" font-weight="normal" >,</text>
<text x="1136" y="191.5" font-size="12.8" fill="#ff0000" text-anchor="start" font-weight="normal" >70.71</text>
<text x="1230" y="191.5" font-size="12.8" fill="#fff" text-anchor="start" font-weight="normal" >[J/kg]</text>
<text x="894" y="208.5" font-size="12.8" fill="#fff" text-anchor="start" font-weight="normal" >3km SFC CAPE | IL CAPE:</text>
<text x="1124" y="208.5" font-size="12.8" fill="#ffff00" text-anchor="end" font-weight="normal" >41.03</text>
<text x="1124" y="208.5" font-size="12.8" fill="#fff" text-anchor="start" font-weight="normal" >,</text>
<text x="1136" y="208.5" font-size="12.8" fill="#ff0000" text-anchor="start" font-weight="normal" >1446.37</text>
<text x="1230" y="208.5" font-size="12.8" fill="#fff" text-anchor="start" font-weight="normal" >[J/kg]</text>
<text x="894" y="225.5" font-size="12.8" fill="#fff" text-anchor="start" font-weight="normal" >DCAPE (LFS = 646mB):</text>
<text x="1124" y="225.5" font-size="12.8" fill="#ffff00" text-anchor="end" font-weight="normal" >448.00</text>
<text x="1230" y="225.5" font-size="12.8" fill="#fff" text-anchor="start" font-weight="normal" >[J/kg]</text>
<text x="894" y="242.5" font-size="12.8" fill="#fff" text-anchor="start" font-weight="normal" >850-600 Lapse Rate:</text>
<text x="1124" y="242.5" font-size="12.8" fill="#ff0000" text-anchor="end" font-weight="normal" >21.69</text>
<text x="1230" y="242.5" font-size="12.8" fill="#fff" text-anchor="start" font-weight="normal" >[°C]</text>
<text x="894" y="259.5" font-size="12.8" fill="#fff" text-anchor="start" font-weight="normal" >FM Hail Size | SHIP | LHP:</text>
<text x="1124" y="259.5" font-size="12.8" fill="#ff0000" text-anchor="end" font-weight="normal" >2.5 - 3.8</text>
<text x="1124" y="259.5" font-size="12.8" fill="#fff" text-anchor="start" font-weight="normal" >,</text>
<text x="1136" y="259.5" font-size="12.8" fill="#ff0000" text-anchor="start" font-weight="normal" >2.21</text>
<text x="1163" y="259.5" font-size="12.8" fill="#fff" text-anchor="start" font-weight="normal" >,</text>
<text x="1174" y="259.5" font-size="12.8" fill="#ff0000" text-anchor="start" font-weight="normal" >13.86</text>
<text x="1230" y="259.5" font-size="12.8" fill="#fff" text-anchor="start" font-weight="normal" >[cm], [1], [1]</text>
<text x="894" y="276.5" font-size="12.8" fill="#fff" text-anchor="start" font-weight="normal" >Estofex Exp. Hail Param:</text>
<text x="1124" y="276.5" font-size="12.8" fill="#ff0000" text-anchor="end" font-weight="normal" >4.00</text>
<text x="1230" y="276.5" font-size="12.8" fill="#fff" text-anchor="start" font-weight="normal" >[cm]</text>
<text x="894" y="293.5" font-size="12.8" fill="#fff" text-anchor="start" font-weight="normal" >Max. Hail Size (OLD, MU, IL):</text>
<text x="1124" y="293.5" font-size="12.8" fill="#ff0000" text-anchor="end" font-weight="normal" >5.72</text>
<text x="1124" y="293.5" font-size="12.8" fill="#fff" text-anchor="start" font-weight="normal" >,</text>
<text x="1136" y="293.5" font-size="12.8" fill="#ff0000" text-anchor="start" font-weight="normal" >4.88</text>
<text x="1161" y="293.5" font-size="12.8" fill="#fff" text-anchor="start" font-weight="normal" >,</text>
<text x="1173" y="293.5" font-size="12.8" fill="#ff0000" text-anchor="start" font-weight="normal" >5.01</text>
<text x="1230" y="293.5" font-size="12.8" fill="#fff" text-anchor="start" font-weight="normal" >[cm]</text>
<text x="894" y="313.5" font-size="12.8" fill="#fff" text-anchor="start" font-weight="normal" >LCL / CCL (AGL):</text>
<text x="1124" y="313.5" font-size="12.8" fill="#ffff00" text-anchor="end" font-weight="normal" >1017.70</text>
<text x="1214" y="313.5" font-size="12.8" fill="#ffff00" text-anchor="end" font-weight="normal" >1773.55</text>
<text x="1230" y="313.5" font-size="12.8" fill="#fff" text-anchor="start" font-weight="normal" >[m]</text>
<text x="894" y="330.5" font-size="12.8" fill="#fff" text-anchor="start" font-weight="normal" >Convective Height:</text>
<text x="1124" y="330.5" font-size="12.8" fill="#ff0000" text-anchor="end" font-weight="normal" >10.39</text>
<text x="1214" y="330.5" font-size="12.8" fill="#ff0000" text-anchor="end" font-weight="normal" >9.96</text>
<text x="1230" y="330.5" font-size="12.8" fill="#fff" text-anchor="start" font-weight="normal" >[km]</text>
<text x="894" y="376" font-size="12.8" fill="#fff" text-anchor="start" font-weight="normal" >Showalter Index:</text>
<text x="1124" y="376" font-size="12.8" fill="#ff0000" text-anchor="end" font-weight="normal" >-1.13</text>
<text x="1230" y="376" font-size="12.8" fill="#fff" text-anchor="start" font-weight="normal" >[°C]</text>
<text x="894" y="393" font-size="12.8" fill="#fff" text-anchor="start" font-weight="normal" >Modified Thompson Index:</text>
<text x="1124" y="393" font-size="12.8" fill="#ff0000" text-anchor="end" font-weight="normal" >44.30</text>
<text x="1230" y="393" font-size="12.8" fill="#fff" text-anchor="start" font-weight="normal" >[°C]</text>
<text x="894" y="410" font-size="12.8" fill="#fff" text-anchor="start" font-weight="normal" >Total Totals Index:</text>
<text x="1124" y="410" font-size="12.8" fill="#ff0000" text-anchor="end" font-weight="normal" >49.80</text>
<text x="1230" y="410" font-size="12.8" fill="#fff" text-anchor="start" font-weight="normal" >[°C]</text>
<text x="894" y="427" font-size="12.8" fill="#fff" text-anchor="start" font-weight="normal" >KO Index:</text>
<text x="1124" y="427" font-size="12.8" fill="#ff0000" text-anchor="end" font-weight="normal" >-17.11</text>
<text x="1230" y="427" font-size="12.8" fill="#fff" text-anchor="start" font-weight="normal" >[1]</text>
<text x="894" y="444" font-size="12.8" fill="#fff" text-anchor="start" font-weight="normal" >Craven SigSvr / 1000:</text>
<text x="1124" y="444" font-size="12.8" fill="#ff0000" text-anchor="end" font-weight="normal" >40.11</text>
<text x="1230" y="444" font-size="12.8" fill="#fff" text-anchor="start" font-weight="normal" >[m^3/s^3]</text>
<text x="894" y="461" font-size="12.8" fill="#fff" text-anchor="start" font-weight="normal" >SCP RM (new, old):</text>
<text x="1124" y="461" font-size="12.8" fill="#ff0000" text-anchor="end" font-weight="normal" >4.60</text>
<text x="1124" y="461" font-size="12.8" fill="#fff" text-anchor="start" font-weight="normal" >,</text>
<text x="1136" y="461" font-size="12.8" fill="#ff0000" text-anchor="start" font-weight="normal" >10.26</text>
<text x="1230" y="461" font-size="12.8" fill="#fff" text-anchor="start" font-weight="normal" >[1]</text>
<text x="894" y="478" font-size="12.8" fill="#fff" text-anchor="start" font-weight="normal" >STP (new, old):</text>
<text x="1124" y="478" font-size="12.8" fill="#ff0000" text-anchor="end" font-weight="normal" >0.67</text>
<text x="1124" y="478" font-size="12.8" fill="#fff" text-anchor="start" font-weight="normal" >,</text>
<text x="1136" y="478" font-size="12.8" fill="#ff0000" text-anchor="start" font-weight="normal" >0.97</text>
<text x="1230" y="478" font-size="12.8" fill="#fff" text-anchor="start" font-weight="normal" >[1]</text>
<text x="894" y="495" font-size="12.8" fill="#fff" text-anchor="start" font-weight="normal" >SB STP (fix) | CWASP:</text>
<text x="1124" y="495" font-size="12.8" fill="#ff0000" text-anchor="end" font-weight="normal" >1.02</text>
<text x="1124" y="495" font-size="12.8" fill="#fff" text-anchor="start" font-weight="normal" >,</text>
<text x="1136" y="495" font-size="12.8" fill="#ff0000" text-anchor="start" font-weight="normal" >71.72</text>
<text x="1230" y="495" font-size="12.8" fill="#fff" text-anchor="start" font-weight="normal" >[1], [%]</text>
<text x="894" y="512" font-size="12.8" fill="#fff" text-anchor="start" font-weight="normal" >DCP | MMP | MSP:</text>
<text x="1124" y="512" font-size="12.8" fill="#ff0000" text-anchor="end" font-weight="normal" >1.73</text>
<text x="1124" y="512" font-size="12.8" fill="#fff" text-anchor="start" font-weight="normal" >,</text>
<text x="1136" y="512" font-size="12.8" fill="#ff0000" text-anchor="start" font-weight="normal" >99.26</text>
<text x="1172" y="512" font-size="12.8" fill="#fff" text-anchor="start" font-weight="normal" >,</text>
<text x="1180" y="512" font-size="12.8" fill="#ffff00" text-anchor="start" font-weight="normal" >69.77</text>
<text x="1230" y="512" font-size="12.8" fill="#fff" text-anchor="start" font-weight="normal" >[1], [%], [%]</text>
<text x="894" y="529" font-size="12.8" fill="#fff" text-anchor="start" font-weight="normal" >MB Comp | SHERBE:</text>
<text x="1124" y="529" font-size="12.8" fill="#00ff00" text-anchor="end" font-weight="normal" >0.00</text>
<text x="1124" y="529" font-size="12.8" fill="#fff" text-anchor="start" font-weight="normal" >,</text>
<text x="1136" y="529" font-size="12.8" fill="#ff0000" text-anchor="start" font-weight="normal" >1.79</text>
<text x="1230" y="529" font-size="12.8" fill="#fff" text-anchor="start" font-weight="normal" >[1], [1]</text>
<text x="894" y="546" font-size="12.8" fill="#fff" text-anchor="start" font-weight="normal" >Exp. Supercell Index CH:</text>
<text x="1124" y="546" font-size="12.8" fill="#ff0000" text-anchor="end" font-weight="normal" >6.00</text>
<text x="1230" y="546" font-size="12.8" fill="#fff" text-anchor="start" font-weight="normal" >[1]</text>
<text x="894" y="563" font-size="12.8" fill="#fff" text-anchor="start" font-weight="normal" >SWISS 12 Index:</text>
<text x="1124" y="563" font-size="12.8" fill="#ff0000" text-anchor="end" font-weight="normal" >-18.27</text>
<text x="1230" y="563" font-size="12.8" fill="#fff" text-anchor="start" font-weight="normal" >[1]</text>
<text x="894" y="580" font-size="12.8" fill="#fff" text-anchor="start" font-weight="normal" >Precipitable Water:</text>
<text x="1124" y="580" font-size="12.8" fill="#ff0000" text-anchor="end" font-weight="normal" >31.08</text>
<text x="1230" y="580" font-size="12.8" fill="#fff" text-anchor="start" font-weight="normal" >[mm]</text>
<text x="894" y="624.5" font-size="12.8" fill="#fff" text-anchor="start" font-weight="normal" >Storm Direction | Motion:</text>
<text x="1124" y="624.5" font-size="12.8" fill="#fff" text-anchor="end" font-weight="normal" >226.66</text>
<text x="1124" y="624.5" font-size="12.8" fill="#fff" text-anchor="start" font-weight="normal" >,</text>
<text x="1136" y="624.5" font-size="12.8" fill="#ffff00" text-anchor="start" font-weight="normal" >20.12</text>
<text x="1230" y="624.5" font-size="12.8" fill="#fff" text-anchor="start" font-weight="normal" >[°], [knt]</text>
<text x="894" y="641.5" font-size="12.8" fill="#fff" text-anchor="start" font-weight="normal" >500m Critical Angle:</text>
<text x="1124" y="641.5" font-size="12.8" fill="#ff0000" text-anchor="end" font-weight="normal" >94.93</text>
<text x="1230" y="641.5" font-size="12.8" fill="#fff" text-anchor="start" font-weight="normal" >[°]</text>
<text x="894" y="661.5" font-size="12.8" fill="#fff" text-anchor="start" font-weight="normal" >SR Wind Sfc-2km:</text>
<text x="1124" y="661.5" font-size="12.8" fill="#ff0000" text-anchor="end" font-weight="normal" >22.27</text>
<text x="1230" y="661.5" font-size="12.8" fill="#fff" text-anchor="start" font-weight="normal" >[knt]</text>
<text x="894" y="678.5" font-size="12.8" fill="#fff" text-anchor="start" font-weight="normal" >SR Wind 4km-6km:</text>
<text x="1124" y="678.5" font-size="12.8" fill="#ff0000" text-anchor="end" font-weight="normal" >26.39</text>
<text x="1230" y="678.5" font-size="12.8" fill="#fff" text-anchor="start" font-weight="normal" >[knt]</text>
<text x="894" y="695.5" font-size="12.8" fill="#fff" text-anchor="start" font-weight="normal" >SR Wind 9km-11km:</text>
<text x="1124" y="695.5" font-size="12.8" fill="#ff0000" text-anchor="end" font-weight="normal" >52.92</text>
<text x="1230" y="695.5" font-size="12.8" fill="#fff" text-anchor="start" font-weight="normal" >[knt] CL</text>
<text x="894" y="715.5" font-size="12.8" fill="#fff" text-anchor="start" font-weight="normal" >Effective Shear 6000:</text>
<text x="1124" y="715.5" font-size="12.8" fill="#ff0000" text-anchor="end" font-weight="normal" >54.95</text>
<text x="1230" y="715.5" font-size="12.8" fill="#fff" text-anchor="start" font-weight="normal" >[knt]</text>
<text x="894" y="735.5" font-size="12.8" fill="#fff" text-anchor="start" font-weight="normal" >Bulk Richardson Number:</text>
<text x="1124" y="735.5" font-size="12.8" fill="#ff0000" text-anchor="end" font-weight="normal" >11.78</text>
<text x="1214" y="735.5" font-size="12.8" fill="#ff0000" text-anchor="end" font-weight="normal" >22.04</text>
<text x="1230" y="735.5" font-size="12.8" fill="#fff" text-anchor="start" font-weight="normal" >[1]</text>
<text x="894" y="755.5" font-size="12.8" fill="#fff" text-anchor="start" font-weight="normal" >3km Effective SRH:</text>
<text x="1124" y="755.5" font-size="12.8" fill="#ff0000" text-anchor="end" font-weight="normal" >160.86</text>
<text x="1230" y="755.5" font-size="12.8" fill="#fff" text-anchor="start" font-weight="normal" >[m^2/s^2]</text>
<text x="894" y="772.5" font-size="12.8" fill="#fff" text-anchor="start" font-weight="normal" >Max 3km SRH (0-2km) | AGL:</text>
<text x="1124" y="772.5" font-size="12.8" fill="#ff0000" text-anchor="end" font-weight="normal" >172.25</text>
<text x="1124" y="772.5" font-size="12.8" fill="#fff" text-anchor="start" font-weight="normal" >,</text>
<text x="1136" y="772.5" font-size="12.8" fill="#ff0000" text-anchor="start" font-weight="normal" >257.00</text>
<text x="1230" y="772.5" font-size="12.8" fill="#fff" text-anchor="start" font-weight="normal" >[m^2/s^2], [m]</text>
<text x="894" y="792.5" font-size="12.8" fill="#fff" text-anchor="start" font-weight="normal" >3km Energy Helicity Index:</text>
<text x="1124" y="792.5" font-size="12.8" fill="#ff0000" text-anchor="end" font-weight="normal" >1.43</text>
<text x="1214" y="792.5" font-size="12.8" fill="#ff0000" text-anchor="end" font-weight="normal" >2.67</text>
<text x="1230" y="792.5" font-size="12.8" fill="#fff" text-anchor="start" font-weight="normal" >[1]</text>
<text x="894" y="809.5" font-size="12.8" fill="#fff" text-anchor="start" font-weight="normal" >3km Vorticity Gen. Pot.:</text>
<text x="1124" y="809.5" font-size="12.8" fill="#ff0000" text-anchor="end" font-weight="normal" >0.30</text>
<text x="1214" y="809.5" font-size="12.8" fill="#ff0000" text-anchor="end" font-weight="normal" >0.41</text>
<text x="1230" y="809.5" font-size="12.8" fill="#fff" text-anchor="start" font-weight="normal" >[m/s^2]</text>
<text x="894" y="103" font-size="12.8" fill="#fff" text-anchor="start" font-weight="normal" >Parcels: Using 50mB mean layer LCL + CCL</text>
<line x1="894" y1="105.5" x2="1152" y2="105.5" stroke="#fff" shape-rendering="crispEdges"/>
<text x="894" y="355.5" font-size="12.8" fill="#fff" text-anchor="start" font-weight="normal" >Convective Indices</text>
<line x1="894" y1="357.5" x2="1000" y2="357.5" stroke="#fff" shape-rendering="crispEdges"/>
<text x="894" y="604.5" font-size="12.8" fill="#fff" text-anchor="start" font-weight="normal" >Wind Parameters</text>
<line x1="894" y1="606.5" x2="995" y2="606.5" stroke="#fff" shape-rendering="crispEdges"/>
<rect x="729" y="827.5" width="15" height="8" fill="#ff0000"/>
<text x="753" y="835.5" font-size="12.8" fill="#ff0000">Temperature Profile</text>
<rect x="729" y="847.5" width="15" height="8" fill="#00ffff"/>
<text x="753" y="855.5" font-size="12.8" fill="#00ffff">Dewpoint Profile</text>
<rect x="729" y="867.5" width="15" height="8" fill="#00ff00"/>
<text x="753" y="875.5" font-size="12.8" fill="#00ff00">OBS Windspeed Profile</text>
<rect x="729" y="887.5" width="15" height="8" fill="#ff0080"/>
<text x="753" y="895.5" font-size="12.8" fill="#ff0080">SR Windspeed Profile</text>
<rect x="729" y="907.5" width="15" height="8" fill="#c8c800"/>
<text x="753" y="915.5" font-size="12.8" fill="#c8c800">Sfc-3km Storm Relative Helicity Profile</text>
<rect x="729" y="927.5" width="15" height="8" fill="#404000"/>
<text x="753" y="935.5" font-size="12.8" fill="#404000">Effective Layer (CAPE &gt;= 100 J/kg)</text>
<rect x="1079" y="827.5" width="15" height="8" fill="#00ff00"/>
<text x="1103.5" y="835.5" font-size="12.8" fill="#00ff00" text-anchor="start" font-weight="normal" >No / Non Severe Thunderstorms</text>
<rect x="1079" y="847.5" width="15" height="8" fill="#ffff00"/>
<text x="1103.5" y="855.5" font-size="12.8" fill="#ffff00" text-anchor="start" font-weight="normal" >Scattered / Moderate Thunderstorms</text>
<rect x="1079" y="867.5" width="15" height="8" fill="#ff0000"/>
<text x="1103.5" y="875.5" font-size="12.8" fill="#ff0000" text-anchor="start" font-weight="normal" >Widespread / Severe Thunderstorms</text>
</svg></body></html>
